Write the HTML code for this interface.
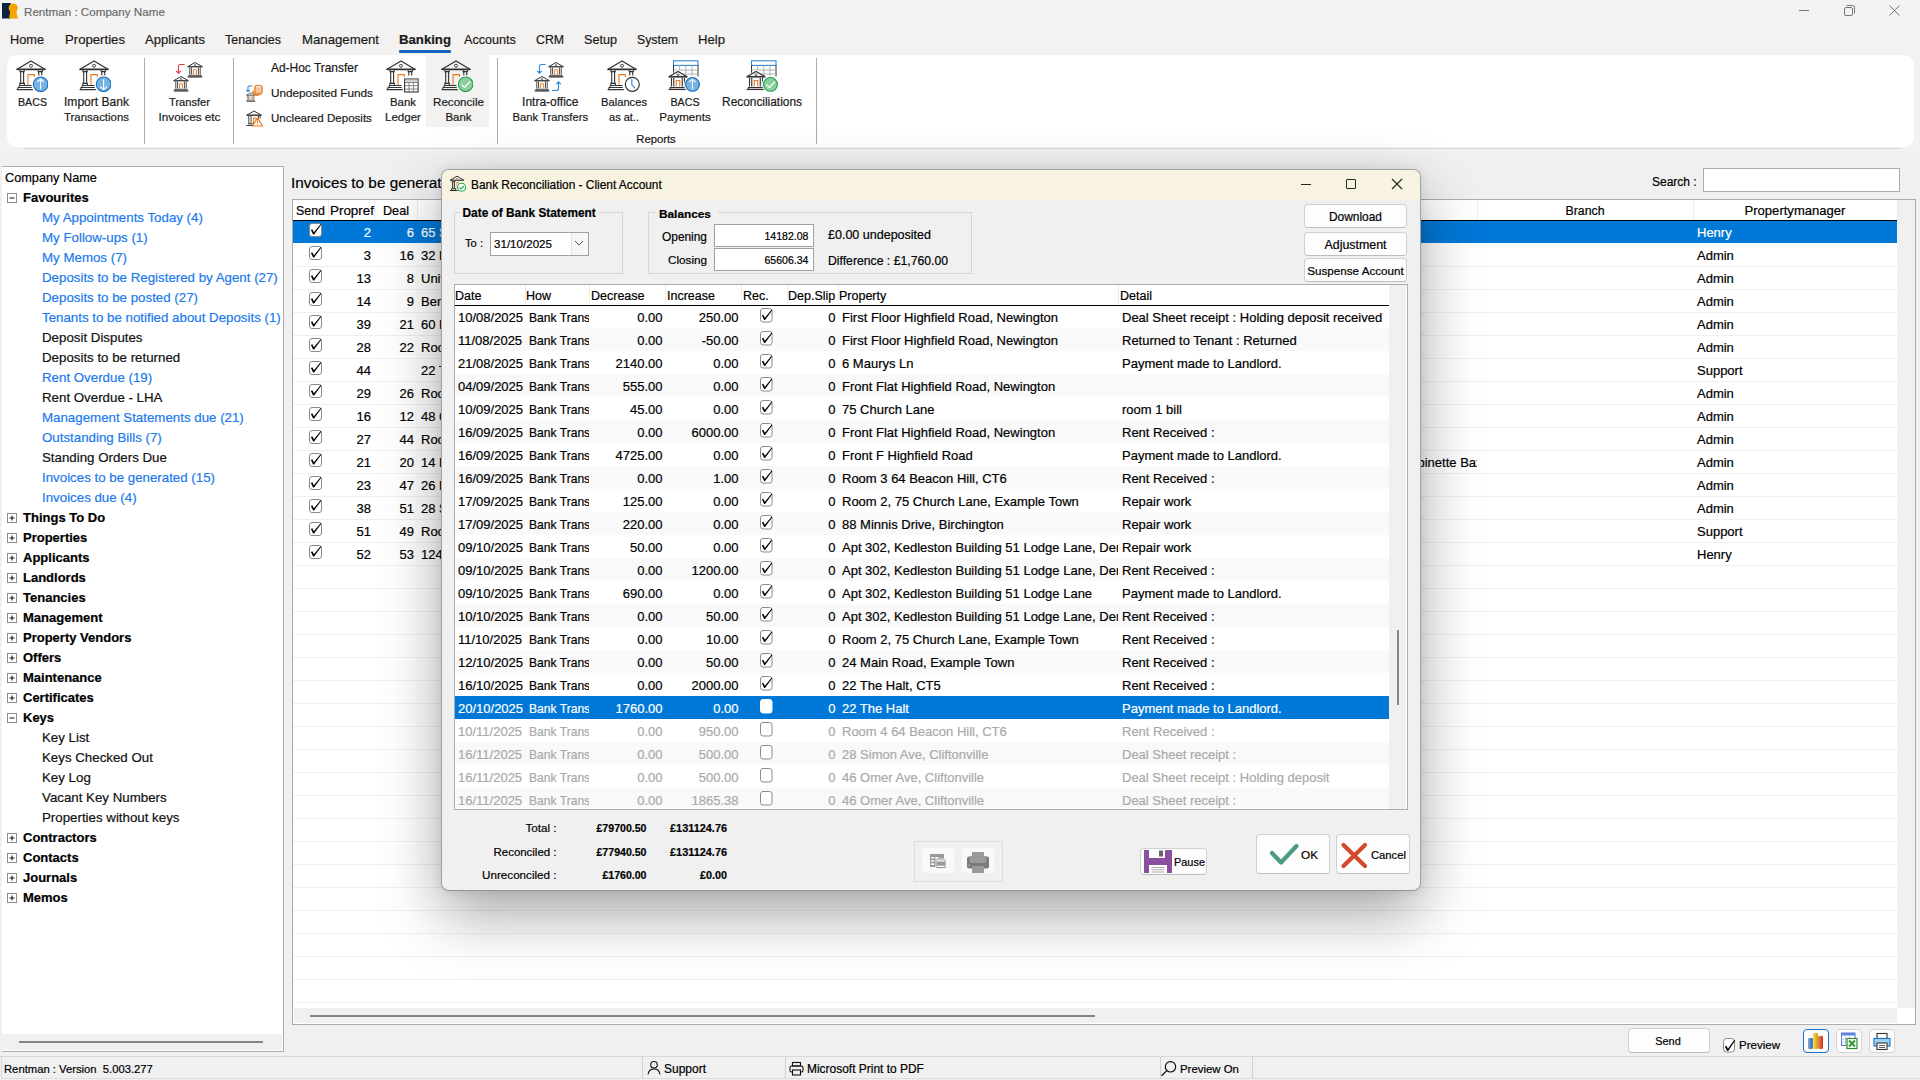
<!DOCTYPE html>
<html><head><meta charset="utf-8"><title>Rentman</title>
<style>html,body{margin:0;padding:0;}
body{width:1920px;height:1080px;overflow:hidden;position:relative;background:#f0f0f0;font-family:"Liberation Sans",sans-serif;}
.t{position:absolute;white-space:pre;line-height:20px;-webkit-text-stroke:0.2px currentColor;}
.a{position:absolute;}
</style></head>
<body>
<div class=a style="left:0;top:0;width:1920px;height:153px;background:#f3f2f0"></div>
<div class=a style="left:0;top:0;width:1920px;height:23px;background:#f3f3f3"></div>
<svg class=a style="left:1px;top:2px" width="18" height="18" viewBox="0 0 18 18"><rect x="1" y="1" width="8.8" height="15.5" fill="#0d2340"/><circle cx="12.2" cy="6" r="4.6" fill="#f7a400"/><path d="M9.6,7.5 L8,16.5 H17 L14.8,7.5 Z" fill="#f7a400"/></svg>
<div class=t style="top:2px;font-size:11.64px;color:#6c6c6c;left:24px;">Rentman : Company Name</div>
<div class=a style="left:1799px;top:10px;width:10px;height:1px;background:#777"></div>
<svg class=a style="left:1843px;top:4px" width="13" height="13" viewBox="0 0 13 13"><path d="M3.5,1.5 h6 a2,2 0 0 1 2,2 v6" fill="none" stroke="#777" stroke-width="1"/><rect x="1.5" y="3.5" width="8" height="8" rx="1.5" fill="none" stroke="#777" stroke-width="1"/></svg>
<svg class=a style="left:1888px;top:4px" width="13" height="13" viewBox="0 0 13 13"><path d="M1.5,1.5 L11.5,11.5 M11.5,1.5 L1.5,11.5" stroke="#777" stroke-width="1"/></svg>
<div class=t style="top:30px;font-size:12.75px;color:#1a1a1a;left:10px;">Home</div>
<div class=t style="top:30px;font-size:13.16px;color:#1a1a1a;left:65px;">Properties</div>
<div class=t style="top:30px;font-size:13.00px;color:#1a1a1a;left:145px;">Applicants</div>
<div class=t style="top:30px;font-size:12.44px;color:#1a1a1a;left:225px;">Tenancies</div>
<div class=t style="top:30px;font-size:13.19px;color:#1a1a1a;left:302px;">Management</div>
<div class=t style="top:30px;font-size:13.18px;color:#1a1a1a;font-weight:700;left:399px;">Banking</div>
<div class=t style="top:30px;font-size:12.64px;color:#1a1a1a;left:464px;">Accounts</div>
<div class=t style="top:30px;font-size:12.30px;color:#1a1a1a;left:536px;">CRM</div>
<div class=t style="top:30px;font-size:12.63px;color:#1a1a1a;left:584px;">Setup</div>
<div class=t style="top:30px;font-size:12.30px;color:#1a1a1a;left:637px;">System</div>
<div class=t style="top:30px;font-size:13.13px;color:#1a1a1a;left:698px;">Help</div>
<div class=a style="left:399px;top:50px;width:52px;height:3px;background:#1565c0;border-radius:1px"></div>
<div class=a style="left:7px;top:55px;width:1907px;height:92px;background:#fff;border-radius:10px"></div>
<div class=a style="left:23px;top:148px;width:1878px;height:1px;background:#d6d6d6"></div>
<div class=a style="left:426px;top:55px;width:63px;height:72px;background:#f3f2f0"></div>
<div class=a style="left:144px;top:58px;width:1px;height:86px;background:#aeaba8"></div>
<div class=a style="left:233px;top:58px;width:1px;height:86px;background:#aeaba8"></div>
<div class=a style="left:497px;top:58px;width:1px;height:86px;background:#aeaba8"></div>
<div class=a style="left:816px;top:58px;width:1px;height:86px;background:#aeaba8"></div>
<div class=t style="top:92px;font-size:10.65px;color:#1a1a1a;left:-267.5px;width:600px;text-align:center;">BACS</div>
<div class=t style="top:92px;font-size:12.06px;color:#1a1a1a;left:-203.5px;width:600px;text-align:center;">Import Bank</div>
<div class=t style="top:107px;font-size:11.43px;color:#1a1a1a;left:-203.5px;width:600px;text-align:center;">Transactions</div>
<div class=t style="top:92px;font-size:11.12px;color:#1a1a1a;left:-110.5px;width:600px;text-align:center;">Transfer</div>
<div class=t style="top:107px;font-size:11.74px;color:#1a1a1a;left:-110.5px;width:600px;text-align:center;">Invoices etc</div>
<div class=t style="top:92px;font-size:11.41px;color:#1a1a1a;left:103px;width:600px;text-align:center;">Bank</div>
<div class=t style="top:107px;font-size:11.56px;color:#1a1a1a;left:103px;width:600px;text-align:center;">Ledger</div>
<div class=t style="top:92px;font-size:11.61px;color:#1a1a1a;left:158.5px;width:600px;text-align:center;">Reconcile</div>
<div class=t style="top:107px;font-size:11.41px;color:#1a1a1a;left:158.5px;width:600px;text-align:center;">Bank</div>
<div class=t style="top:92px;font-size:12.00px;color:#1a1a1a;left:250.29999999999995px;width:600px;text-align:center;">Intra-office</div>
<div class=t style="top:107px;font-size:11.23px;color:#1a1a1a;left:250.29999999999995px;width:600px;text-align:center;">Bank Transfers</div>
<div class=t style="top:92px;font-size:11.18px;color:#1a1a1a;left:324px;width:600px;text-align:center;">Balances</div>
<div class=t style="top:107px;font-size:11.01px;color:#1a1a1a;left:324px;width:600px;text-align:center;">as at..</div>
<div class=t style="top:92px;font-size:10.65px;color:#1a1a1a;left:385px;width:600px;text-align:center;">BACS</div>
<div class=t style="top:107px;font-size:11.58px;color:#1a1a1a;left:385px;width:600px;text-align:center;">Payments</div>
<div class=t style="top:92px;font-size:11.89px;color:#1a1a1a;left:462px;width:600px;text-align:center;">Reconciliations</div>
<div class=t style="top:129px;font-size:11.28px;color:#1a1a1a;left:356px;width:600px;text-align:center;">Reports</div>
<div class=t style="top:58px;font-size:11.95px;color:#1a1a1a;left:271px;">Ad-Hoc Transfer</div>
<div class=t style="top:83px;font-size:11.76px;color:#1a1a1a;left:271px;">Undeposited Funds</div>
<div class=t style="top:108px;font-size:11.57px;color:#1a1a1a;left:271px;">Uncleared Deposits</div>
<div class=a style="left:2px;top:166px;width:281px;height:884px;background:#fff;border:1px solid #abacb2;border-left:0"></div>
<div class=a style="left:2px;top:1034px;width:280px;height:16px;background:#f0f0f0"></div>
<div class=a style="left:19px;top:1041px;width:244px;height:2px;background:#858585"></div>
<div class=t style="top:168px;font-size:12.73px;color:#000;left:5px;">Company Name</div>
<svg class=a style="left:6px;top:192px" width="11" height="11" viewBox="0 0 11 11"><rect x="1.5" y="1.5" width="9" height="9" fill="#fff" stroke="#8e8e8e"/><path d="M3.5,6 h5" stroke="#111" stroke-width="1"/></svg>
<div class=t style="top:188px;font-size:13.00px;color:#000;font-weight:700;left:23px;">Favourites</div>
<div class=t style="top:208px;font-size:13.30px;color:#1a7aee;left:42px;">My Appointments Today (4)</div>
<div class=t style="top:228px;font-size:13.30px;color:#1a7aee;left:42px;">My Follow-ups (1)</div>
<div class=t style="top:248px;font-size:13.30px;color:#1a7aee;left:42px;">My Memos (7)</div>
<div class=t style="top:268px;font-size:13.30px;color:#1a7aee;left:42px;">Deposits to be Registered by Agent (27)</div>
<div class=t style="top:288px;font-size:13.30px;color:#1a7aee;left:42px;">Deposits to be posted (27)</div>
<div class=t style="top:308px;font-size:13.30px;color:#1a7aee;left:42px;">Tenants to be notified about Deposits (1)</div>
<div class=t style="top:328px;font-size:13.30px;color:#111;left:42px;">Deposit Disputes</div>
<div class=t style="top:348px;font-size:13.30px;color:#111;left:42px;">Deposits to be returned</div>
<div class=t style="top:368px;font-size:13.30px;color:#1a7aee;left:42px;">Rent Overdue (19)</div>
<div class=t style="top:388px;font-size:13.30px;color:#111;left:42px;">Rent Overdue - LHA</div>
<div class=t style="top:408px;font-size:13.30px;color:#1a7aee;left:42px;">Management Statements due (21)</div>
<div class=t style="top:428px;font-size:13.30px;color:#1a7aee;left:42px;">Outstanding Bills (7)</div>
<div class=t style="top:448px;font-size:13.30px;color:#111;left:42px;">Standing Orders Due</div>
<div class=t style="top:468px;font-size:13.30px;color:#1a7aee;left:42px;">Invoices to be generated (15)</div>
<div class=t style="top:488px;font-size:13.30px;color:#1a7aee;left:42px;">Invoices due (4)</div>
<svg class=a style="left:6px;top:512px" width="11" height="11" viewBox="0 0 11 11"><rect x="1.5" y="1.5" width="9" height="9" fill="#fff" stroke="#8e8e8e"/><path d="M3.5,6 h5 M6,3.5 v5" stroke="#111" stroke-width="1"/></svg>
<div class=t style="top:508px;font-size:13.00px;color:#000;font-weight:700;left:23px;">Things To Do</div>
<svg class=a style="left:6px;top:532px" width="11" height="11" viewBox="0 0 11 11"><rect x="1.5" y="1.5" width="9" height="9" fill="#fff" stroke="#8e8e8e"/><path d="M3.5,6 h5 M6,3.5 v5" stroke="#111" stroke-width="1"/></svg>
<div class=t style="top:528px;font-size:13.00px;color:#000;font-weight:700;left:23px;">Properties</div>
<svg class=a style="left:6px;top:552px" width="11" height="11" viewBox="0 0 11 11"><rect x="1.5" y="1.5" width="9" height="9" fill="#fff" stroke="#8e8e8e"/><path d="M3.5,6 h5 M6,3.5 v5" stroke="#111" stroke-width="1"/></svg>
<div class=t style="top:548px;font-size:13.00px;color:#000;font-weight:700;left:23px;">Applicants</div>
<svg class=a style="left:6px;top:572px" width="11" height="11" viewBox="0 0 11 11"><rect x="1.5" y="1.5" width="9" height="9" fill="#fff" stroke="#8e8e8e"/><path d="M3.5,6 h5 M6,3.5 v5" stroke="#111" stroke-width="1"/></svg>
<div class=t style="top:568px;font-size:13.00px;color:#000;font-weight:700;left:23px;">Landlords</div>
<svg class=a style="left:6px;top:592px" width="11" height="11" viewBox="0 0 11 11"><rect x="1.5" y="1.5" width="9" height="9" fill="#fff" stroke="#8e8e8e"/><path d="M3.5,6 h5 M6,3.5 v5" stroke="#111" stroke-width="1"/></svg>
<div class=t style="top:588px;font-size:13.00px;color:#000;font-weight:700;left:23px;">Tenancies</div>
<svg class=a style="left:6px;top:612px" width="11" height="11" viewBox="0 0 11 11"><rect x="1.5" y="1.5" width="9" height="9" fill="#fff" stroke="#8e8e8e"/><path d="M3.5,6 h5 M6,3.5 v5" stroke="#111" stroke-width="1"/></svg>
<div class=t style="top:608px;font-size:13.00px;color:#000;font-weight:700;left:23px;">Management</div>
<svg class=a style="left:6px;top:632px" width="11" height="11" viewBox="0 0 11 11"><rect x="1.5" y="1.5" width="9" height="9" fill="#fff" stroke="#8e8e8e"/><path d="M3.5,6 h5 M6,3.5 v5" stroke="#111" stroke-width="1"/></svg>
<div class=t style="top:628px;font-size:13.00px;color:#000;font-weight:700;left:23px;">Property Vendors</div>
<svg class=a style="left:6px;top:652px" width="11" height="11" viewBox="0 0 11 11"><rect x="1.5" y="1.5" width="9" height="9" fill="#fff" stroke="#8e8e8e"/><path d="M3.5,6 h5 M6,3.5 v5" stroke="#111" stroke-width="1"/></svg>
<div class=t style="top:648px;font-size:13.00px;color:#000;font-weight:700;left:23px;">Offers</div>
<svg class=a style="left:6px;top:672px" width="11" height="11" viewBox="0 0 11 11"><rect x="1.5" y="1.5" width="9" height="9" fill="#fff" stroke="#8e8e8e"/><path d="M3.5,6 h5 M6,3.5 v5" stroke="#111" stroke-width="1"/></svg>
<div class=t style="top:668px;font-size:13.00px;color:#000;font-weight:700;left:23px;">Maintenance</div>
<svg class=a style="left:6px;top:692px" width="11" height="11" viewBox="0 0 11 11"><rect x="1.5" y="1.5" width="9" height="9" fill="#fff" stroke="#8e8e8e"/><path d="M3.5,6 h5 M6,3.5 v5" stroke="#111" stroke-width="1"/></svg>
<div class=t style="top:688px;font-size:13.00px;color:#000;font-weight:700;left:23px;">Certificates</div>
<svg class=a style="left:6px;top:712px" width="11" height="11" viewBox="0 0 11 11"><rect x="1.5" y="1.5" width="9" height="9" fill="#fff" stroke="#8e8e8e"/><path d="M3.5,6 h5" stroke="#111" stroke-width="1"/></svg>
<div class=t style="top:708px;font-size:13.00px;color:#000;font-weight:700;left:23px;">Keys</div>
<div class=t style="top:728px;font-size:13.30px;color:#111;left:42px;">Key List</div>
<div class=t style="top:748px;font-size:13.30px;color:#111;left:42px;">Keys Checked Out</div>
<div class=t style="top:768px;font-size:13.30px;color:#111;left:42px;">Key Log</div>
<div class=t style="top:788px;font-size:13.30px;color:#111;left:42px;">Vacant Key Numbers</div>
<div class=t style="top:808px;font-size:13.30px;color:#111;left:42px;">Properties without keys</div>
<svg class=a style="left:6px;top:832px" width="11" height="11" viewBox="0 0 11 11"><rect x="1.5" y="1.5" width="9" height="9" fill="#fff" stroke="#8e8e8e"/><path d="M3.5,6 h5 M6,3.5 v5" stroke="#111" stroke-width="1"/></svg>
<div class=t style="top:828px;font-size:13.00px;color:#000;font-weight:700;left:23px;">Contractors</div>
<svg class=a style="left:6px;top:852px" width="11" height="11" viewBox="0 0 11 11"><rect x="1.5" y="1.5" width="9" height="9" fill="#fff" stroke="#8e8e8e"/><path d="M3.5,6 h5 M6,3.5 v5" stroke="#111" stroke-width="1"/></svg>
<div class=t style="top:848px;font-size:13.00px;color:#000;font-weight:700;left:23px;">Contacts</div>
<svg class=a style="left:6px;top:872px" width="11" height="11" viewBox="0 0 11 11"><rect x="1.5" y="1.5" width="9" height="9" fill="#fff" stroke="#8e8e8e"/><path d="M3.5,6 h5 M6,3.5 v5" stroke="#111" stroke-width="1"/></svg>
<div class=t style="top:868px;font-size:13.00px;color:#000;font-weight:700;left:23px;">Journals</div>
<svg class=a style="left:6px;top:892px" width="11" height="11" viewBox="0 0 11 11"><rect x="1.5" y="1.5" width="9" height="9" fill="#fff" stroke="#8e8e8e"/><path d="M3.5,6 h5 M6,3.5 v5" stroke="#111" stroke-width="1"/></svg>
<div class=t style="top:888px;font-size:13.00px;color:#000;font-weight:700;left:23px;">Memos</div>
<div class=t style="top:173px;font-size:15.30px;color:#000;left:291px;">Invoices to be generated (15)</div>
<div class=t style="top:172px;font-size:12.00px;color:#000;left:1652px;">Search :</div>
<div class=a style="left:1703px;top:168px;width:195px;height:22px;background:#fff;border:1px solid #a9abb1"></div>
<div class=a style="left:292px;top:199px;width:1622px;height:824px;background:#fff;border:1px solid #abacb2"></div>
<div class=a style="left:1897px;top:200px;width:18px;height:808px;background:#f0f0f0"></div>
<div class=a style="left:294px;top:1008px;width:1603px;height:15px;background:#f0f0f0"></div>
<div class=a style="left:310px;top:1015px;width:785px;height:2px;background:#858585"></div>
<div class=a style="left:293px;top:220px;width:1604px;height:1px;background:#000"></div>
<div class=a style="left:328px;top:200px;width:1px;height:20px;background:#ececec"></div>
<div class=a style="left:374px;top:200px;width:1px;height:20px;background:#ececec"></div>
<div class=a style="left:417px;top:200px;width:1px;height:20px;background:#ececec"></div>
<div class=a style="left:1477px;top:200px;width:1px;height:20px;background:#ececec"></div>
<div class=a style="left:1693px;top:200px;width:1px;height:20px;background:#ececec"></div>
<div class=a style="left:1897px;top:200px;width:1px;height:20px;background:#ececec"></div>
<div class=t style="top:201px;font-size:12.42px;color:#000;left:296px;">Send</div>
<div class=t style="top:201px;font-size:13.42px;color:#000;left:330px;">Propref</div>
<div class=t style="top:201px;font-size:12.64px;color:#000;left:383px;">Deal</div>
<div class=t style="top:201px;font-size:12.31px;color:#000;left:1285px;width:600px;text-align:center;">Branch</div>
<div class=t style="top:201px;font-size:13.07px;color:#000;left:1495px;width:600px;text-align:center;">Propertymanager</div>
<div class=a style="left:293px;top:221px;width:1604px;height:22px;background:#0078d7"></div>
<div class=a style="left:293px;top:266px;width:1604px;height:1px;background:#f0f0f0"></div>
<div class=a style="left:293px;top:289px;width:1604px;height:1px;background:#f0f0f0"></div>
<div class=a style="left:293px;top:312px;width:1604px;height:1px;background:#f0f0f0"></div>
<div class=a style="left:293px;top:335px;width:1604px;height:1px;background:#f0f0f0"></div>
<div class=a style="left:293px;top:358px;width:1604px;height:1px;background:#f0f0f0"></div>
<div class=a style="left:293px;top:381px;width:1604px;height:1px;background:#f0f0f0"></div>
<div class=a style="left:293px;top:404px;width:1604px;height:1px;background:#f0f0f0"></div>
<div class=a style="left:293px;top:427px;width:1604px;height:1px;background:#f0f0f0"></div>
<div class=a style="left:293px;top:450px;width:1604px;height:1px;background:#f0f0f0"></div>
<div class=a style="left:293px;top:473px;width:1604px;height:1px;background:#f0f0f0"></div>
<div class=a style="left:293px;top:496px;width:1604px;height:1px;background:#f0f0f0"></div>
<div class=a style="left:293px;top:519px;width:1604px;height:1px;background:#f0f0f0"></div>
<div class=a style="left:293px;top:542px;width:1604px;height:1px;background:#f0f0f0"></div>
<div class=a style="left:293px;top:565px;width:1604px;height:1px;background:#f0f0f0"></div>
<div class=a style="left:293px;top:588px;width:1604px;height:1px;background:#f0f0f0"></div>
<div class=a style="left:293px;top:611px;width:1604px;height:1px;background:#f0f0f0"></div>
<div class=a style="left:293px;top:634px;width:1604px;height:1px;background:#f0f0f0"></div>
<div class=a style="left:293px;top:657px;width:1604px;height:1px;background:#f0f0f0"></div>
<div class=a style="left:293px;top:680px;width:1604px;height:1px;background:#f0f0f0"></div>
<div class=a style="left:293px;top:703px;width:1604px;height:1px;background:#f0f0f0"></div>
<div class=a style="left:293px;top:726px;width:1604px;height:1px;background:#f0f0f0"></div>
<div class=a style="left:293px;top:749px;width:1604px;height:1px;background:#f0f0f0"></div>
<div class=a style="left:293px;top:772px;width:1604px;height:1px;background:#f0f0f0"></div>
<div class=a style="left:293px;top:795px;width:1604px;height:1px;background:#f0f0f0"></div>
<div class=a style="left:293px;top:818px;width:1604px;height:1px;background:#f0f0f0"></div>
<div class=a style="left:293px;top:841px;width:1604px;height:1px;background:#f0f0f0"></div>
<div class=a style="left:293px;top:864px;width:1604px;height:1px;background:#f0f0f0"></div>
<div class=a style="left:293px;top:887px;width:1604px;height:1px;background:#f0f0f0"></div>
<div class=a style="left:293px;top:910px;width:1604px;height:1px;background:#f0f0f0"></div>
<div class=a style="left:293px;top:933px;width:1604px;height:1px;background:#f0f0f0"></div>
<div class=a style="left:293px;top:956px;width:1604px;height:1px;background:#f0f0f0"></div>
<div class=a style="left:293px;top:979px;width:1604px;height:1px;background:#f0f0f0"></div>
<div class=a style="left:293px;top:1002px;width:1604px;height:1px;background:#f0f0f0"></div>
<div class=t style="top:223px;font-size:13.00px;color:#fff;left:-229px;width:600px;text-align:right;">2</div>
<div class=t style="top:223px;font-size:13.00px;color:#fff;left:-186px;width:600px;text-align:right;">6</div>
<div class=t style="top:223px;font-size:13.00px;color:#fff;left:421px;">65 S</div>
<div class=t style="top:223px;font-size:13.00px;color:#fff;left:1697px;">Henry</div>
<svg class=a style="left:309px;top:223px" width="13" height="14" viewBox="0 0 13 14"><rect x="0.5" y="0.5" width="12" height="13" rx="2.5" fill="#fff" stroke="#8a8a8a"/><path d="M1.9,6.9 L3.3,6.2 L4.9,9.3 L11.7,1 L12.4,1.6 L5.1,11.5 L4.1,11.5 Z" fill="#000"/></svg>
<div class=t style="top:246px;font-size:13.00px;color:#000;left:-229px;width:600px;text-align:right;">3</div>
<div class=t style="top:246px;font-size:13.00px;color:#000;left:-186px;width:600px;text-align:right;">16</div>
<div class=t style="top:246px;font-size:13.00px;color:#000;left:421px;">32 P</div>
<div class=t style="top:246px;font-size:13.00px;color:#000;left:1697px;">Admin</div>
<svg class=a style="left:309px;top:246px" width="13" height="14" viewBox="0 0 13 14"><rect x="0.5" y="0.5" width="12" height="13" rx="2.5" fill="#fff" stroke="#8a8a8a"/><path d="M1.9,6.9 L3.3,6.2 L4.9,9.3 L11.7,1 L12.4,1.6 L5.1,11.5 L4.1,11.5 Z" fill="#000"/></svg>
<div class=t style="top:269px;font-size:13.00px;color:#000;left:-229px;width:600px;text-align:right;">13</div>
<div class=t style="top:269px;font-size:13.00px;color:#000;left:-186px;width:600px;text-align:right;">8</div>
<div class=t style="top:269px;font-size:13.00px;color:#000;left:421px;">Unit</div>
<div class=t style="top:269px;font-size:13.00px;color:#000;left:1697px;">Admin</div>
<svg class=a style="left:309px;top:269px" width="13" height="14" viewBox="0 0 13 14"><rect x="0.5" y="0.5" width="12" height="13" rx="2.5" fill="#fff" stroke="#8a8a8a"/><path d="M1.9,6.9 L3.3,6.2 L4.9,9.3 L11.7,1 L12.4,1.6 L5.1,11.5 L4.1,11.5 Z" fill="#000"/></svg>
<div class=t style="top:292px;font-size:13.00px;color:#000;left:-229px;width:600px;text-align:right;">14</div>
<div class=t style="top:292px;font-size:13.00px;color:#000;left:-186px;width:600px;text-align:right;">9</div>
<div class=t style="top:292px;font-size:13.00px;color:#000;left:421px;">Ben</div>
<div class=t style="top:292px;font-size:13.00px;color:#000;left:1697px;">Admin</div>
<svg class=a style="left:309px;top:292px" width="13" height="14" viewBox="0 0 13 14"><rect x="0.5" y="0.5" width="12" height="13" rx="2.5" fill="#fff" stroke="#8a8a8a"/><path d="M1.9,6.9 L3.3,6.2 L4.9,9.3 L11.7,1 L12.4,1.6 L5.1,11.5 L4.1,11.5 Z" fill="#000"/></svg>
<div class=t style="top:315px;font-size:13.00px;color:#000;left:-229px;width:600px;text-align:right;">39</div>
<div class=t style="top:315px;font-size:13.00px;color:#000;left:-186px;width:600px;text-align:right;">21</div>
<div class=t style="top:315px;font-size:13.00px;color:#000;left:421px;">60 M</div>
<div class=t style="top:315px;font-size:13.00px;color:#000;left:1697px;">Admin</div>
<svg class=a style="left:309px;top:315px" width="13" height="14" viewBox="0 0 13 14"><rect x="0.5" y="0.5" width="12" height="13" rx="2.5" fill="#fff" stroke="#8a8a8a"/><path d="M1.9,6.9 L3.3,6.2 L4.9,9.3 L11.7,1 L12.4,1.6 L5.1,11.5 L4.1,11.5 Z" fill="#000"/></svg>
<div class=t style="top:338px;font-size:13.00px;color:#000;left:-229px;width:600px;text-align:right;">28</div>
<div class=t style="top:338px;font-size:13.00px;color:#000;left:-186px;width:600px;text-align:right;">22</div>
<div class=t style="top:338px;font-size:13.00px;color:#000;left:421px;">Roo</div>
<div class=t style="top:338px;font-size:13.00px;color:#000;left:1697px;">Admin</div>
<svg class=a style="left:309px;top:338px" width="13" height="14" viewBox="0 0 13 14"><rect x="0.5" y="0.5" width="12" height="13" rx="2.5" fill="#fff" stroke="#8a8a8a"/><path d="M1.9,6.9 L3.3,6.2 L4.9,9.3 L11.7,1 L12.4,1.6 L5.1,11.5 L4.1,11.5 Z" fill="#000"/></svg>
<div class=t style="top:361px;font-size:13.00px;color:#000;left:-229px;width:600px;text-align:right;">44</div>
<div class=t style="top:361px;font-size:13.00px;color:#000;left:-186px;width:600px;text-align:right;"></div>
<div class=t style="top:361px;font-size:13.00px;color:#000;left:421px;">22 T</div>
<div class=t style="top:361px;font-size:13.00px;color:#000;left:1697px;">Support</div>
<svg class=a style="left:309px;top:361px" width="13" height="14" viewBox="0 0 13 14"><rect x="0.5" y="0.5" width="12" height="13" rx="2.5" fill="#fff" stroke="#8a8a8a"/><path d="M1.9,6.9 L3.3,6.2 L4.9,9.3 L11.7,1 L12.4,1.6 L5.1,11.5 L4.1,11.5 Z" fill="#000"/></svg>
<div class=t style="top:384px;font-size:13.00px;color:#000;left:-229px;width:600px;text-align:right;">29</div>
<div class=t style="top:384px;font-size:13.00px;color:#000;left:-186px;width:600px;text-align:right;">26</div>
<div class=t style="top:384px;font-size:13.00px;color:#000;left:421px;">Roo</div>
<div class=t style="top:384px;font-size:13.00px;color:#000;left:1697px;">Admin</div>
<svg class=a style="left:309px;top:384px" width="13" height="14" viewBox="0 0 13 14"><rect x="0.5" y="0.5" width="12" height="13" rx="2.5" fill="#fff" stroke="#8a8a8a"/><path d="M1.9,6.9 L3.3,6.2 L4.9,9.3 L11.7,1 L12.4,1.6 L5.1,11.5 L4.1,11.5 Z" fill="#000"/></svg>
<div class=t style="top:407px;font-size:13.00px;color:#000;left:-229px;width:600px;text-align:right;">16</div>
<div class=t style="top:407px;font-size:13.00px;color:#000;left:-186px;width:600px;text-align:right;">12</div>
<div class=t style="top:407px;font-size:13.00px;color:#000;left:421px;">48 C</div>
<div class=t style="top:407px;font-size:13.00px;color:#000;left:1697px;">Admin</div>
<svg class=a style="left:309px;top:407px" width="13" height="14" viewBox="0 0 13 14"><rect x="0.5" y="0.5" width="12" height="13" rx="2.5" fill="#fff" stroke="#8a8a8a"/><path d="M1.9,6.9 L3.3,6.2 L4.9,9.3 L11.7,1 L12.4,1.6 L5.1,11.5 L4.1,11.5 Z" fill="#000"/></svg>
<div class=t style="top:430px;font-size:13.00px;color:#000;left:-229px;width:600px;text-align:right;">27</div>
<div class=t style="top:430px;font-size:13.00px;color:#000;left:-186px;width:600px;text-align:right;">44</div>
<div class=t style="top:430px;font-size:13.00px;color:#000;left:421px;">Roo</div>
<div class=t style="top:430px;font-size:13.00px;color:#000;left:1697px;">Admin</div>
<svg class=a style="left:309px;top:430px" width="13" height="14" viewBox="0 0 13 14"><rect x="0.5" y="0.5" width="12" height="13" rx="2.5" fill="#fff" stroke="#8a8a8a"/><path d="M1.9,6.9 L3.3,6.2 L4.9,9.3 L11.7,1 L12.4,1.6 L5.1,11.5 L4.1,11.5 Z" fill="#000"/></svg>
<div class=t style="top:453px;font-size:13.00px;color:#000;left:-229px;width:600px;text-align:right;">21</div>
<div class=t style="top:453px;font-size:13.00px;color:#000;left:-186px;width:600px;text-align:right;">20</div>
<div class=t style="top:453px;font-size:13.00px;color:#000;left:421px;">14 F</div>
<div class=t style="top:453px;font-size:13.00px;color:#000;left:1697px;">Admin</div>
<svg class=a style="left:309px;top:453px" width="13" height="14" viewBox="0 0 13 14"><rect x="0.5" y="0.5" width="12" height="13" rx="2.5" fill="#fff" stroke="#8a8a8a"/><path d="M1.9,6.9 L3.3,6.2 L4.9,9.3 L11.7,1 L12.4,1.6 L5.1,11.5 L4.1,11.5 Z" fill="#000"/></svg>
<div class=t style="top:476px;font-size:13.00px;color:#000;left:-229px;width:600px;text-align:right;">23</div>
<div class=t style="top:476px;font-size:13.00px;color:#000;left:-186px;width:600px;text-align:right;">47</div>
<div class=t style="top:476px;font-size:13.00px;color:#000;left:421px;">26 R</div>
<div class=t style="top:476px;font-size:13.00px;color:#000;left:1697px;">Admin</div>
<svg class=a style="left:309px;top:476px" width="13" height="14" viewBox="0 0 13 14"><rect x="0.5" y="0.5" width="12" height="13" rx="2.5" fill="#fff" stroke="#8a8a8a"/><path d="M1.9,6.9 L3.3,6.2 L4.9,9.3 L11.7,1 L12.4,1.6 L5.1,11.5 L4.1,11.5 Z" fill="#000"/></svg>
<div class=t style="top:499px;font-size:13.00px;color:#000;left:-229px;width:600px;text-align:right;">38</div>
<div class=t style="top:499px;font-size:13.00px;color:#000;left:-186px;width:600px;text-align:right;">51</div>
<div class=t style="top:499px;font-size:13.00px;color:#000;left:421px;">28 S</div>
<div class=t style="top:499px;font-size:13.00px;color:#000;left:1697px;">Admin</div>
<svg class=a style="left:309px;top:499px" width="13" height="14" viewBox="0 0 13 14"><rect x="0.5" y="0.5" width="12" height="13" rx="2.5" fill="#fff" stroke="#8a8a8a"/><path d="M1.9,6.9 L3.3,6.2 L4.9,9.3 L11.7,1 L12.4,1.6 L5.1,11.5 L4.1,11.5 Z" fill="#000"/></svg>
<div class=t style="top:522px;font-size:13.00px;color:#000;left:-229px;width:600px;text-align:right;">51</div>
<div class=t style="top:522px;font-size:13.00px;color:#000;left:-186px;width:600px;text-align:right;">49</div>
<div class=t style="top:522px;font-size:13.00px;color:#000;left:421px;">Roo</div>
<div class=t style="top:522px;font-size:13.00px;color:#000;left:1697px;">Support</div>
<svg class=a style="left:309px;top:522px" width="13" height="14" viewBox="0 0 13 14"><rect x="0.5" y="0.5" width="12" height="13" rx="2.5" fill="#fff" stroke="#8a8a8a"/><path d="M1.9,6.9 L3.3,6.2 L4.9,9.3 L11.7,1 L12.4,1.6 L5.1,11.5 L4.1,11.5 Z" fill="#000"/></svg>
<div class=t style="top:545px;font-size:13.00px;color:#000;left:-229px;width:600px;text-align:right;">52</div>
<div class=t style="top:545px;font-size:13.00px;color:#000;left:-186px;width:600px;text-align:right;">53</div>
<div class=t style="top:545px;font-size:13.00px;color:#000;left:421px;">124</div>
<div class=t style="top:545px;font-size:13.00px;color:#000;left:1697px;">Henry</div>
<svg class=a style="left:309px;top:545px" width="13" height="14" viewBox="0 0 13 14"><rect x="0.5" y="0.5" width="12" height="13" rx="2.5" fill="#fff" stroke="#8a8a8a"/><path d="M1.9,6.9 L3.3,6.2 L4.9,9.3 L11.7,1 L12.4,1.6 L5.1,11.5 L4.1,11.5 Z" fill="#000"/></svg>
<div class=a style="left:1400px;top:451px;width:77px;height:22px;overflow:hidden">
<div class=t style="top:2px;font-size:13.00px;color:#000;left:17.5px;">binette Baxter</div>
</div>
<div class=a style="left:1628px;top:1028px;width:80px;height:23px;background:#fdfdfd;border:1px solid #d0d0d0;border-radius:4px;border-bottom-color:#bcbcbc"></div>
<div class=t style="top:1031px;font-size:10.92px;color:#000;left:1368px;width:600px;text-align:center;">Send</div>
<svg class=a style="left:1723px;top:1038px" width="13" height="15" viewBox="0 0 13 15"><rect x="0.5" y="0.5" width="11" height="13.5" rx="3" fill="#fff" stroke="#8a8a8a"/><path d="M1.9,8.4 L3.4,7.7 L5,10.8 L11.2,2 L12.2,2.6 L5.2,13 L4.2,13 Z" fill="#000"/></svg>
<div class=t style="top:1035px;font-size:11.53px;color:#000;left:1739px;">Preview</div>
<div class=a style="left:1803px;top:1029px;width:24px;height:22px;background:#fcfcfc;border:1px solid #1a73c8;border-radius:4px"></div>
<div class=a style="left:1836px;top:1029px;width:24px;height:22px;background:#fcfcfc;border:1px solid #d4d4d4;border-radius:4px"></div>
<div class=a style="left:1869px;top:1029px;width:24px;height:22px;background:#fcfcfc;border:1px solid #d4d4d4;border-radius:4px"></div>
<div class=a style="left:0;top:1056px;width:1920px;height:1px;background:#d8d8d8"></div>
<div class=a style="left:1px;top:1056px;width:1px;height:22px;background:#d8d8d8"></div>
<div class=a style="left:0;top:1078px;width:1920px;height:1px;background:#dcdcdc"></div>
<div class=a style="left:642px;top:1057px;width:1px;height:21px;background:#d0d0d0"></div>
<div class=a style="left:785px;top:1057px;width:1px;height:21px;background:#d0d0d0"></div>
<div class=a style="left:1160px;top:1057px;width:1px;height:21px;background:#d0d0d0"></div>
<div class=a style="left:1252px;top:1057px;width:1px;height:21px;background:#d0d0d0"></div>
<div class=t style="top:1059px;font-size:11.26px;color:#000;left:4px;">Rentman : Version  5.003.277</div>
<div class=t style="top:1059px;font-size:11.99px;color:#000;left:664px;">Support</div>
<div class=t style="top:1059px;font-size:11.96px;color:#000;left:807px;">Microsoft Print to PDF</div>
<div class=t style="top:1059px;font-size:11.42px;color:#000;left:1180px;">Preview On</div>
<div class=a style="left:441px;top:169px;width:978px;height:720px;background:#f0f0f0;border:1px solid #a2a2a2;border-bottom-color:#959595;border-radius:8px;box-shadow:0 24px 60px rgba(0,0,0,0.35),0 0 10px rgba(0,0,0,0.1)"></div>
<div class=a style="left:442px;top:170px;width:978px;height:30px;background:#f8f3e0;border-radius:7px 7px 0 0"></div>
<div class=t style="top:175px;font-size:11.89px;color:#000;left:471px;">Bank Reconciliation - Client Account</div>
<div class=a style="left:1301px;top:184px;width:10px;height:1px;background:#222"></div>
<div class=a style="left:1346px;top:179px;width:8px;height:8px;border:1px solid #222;border-radius:1px"></div>
<svg class=a style="left:1391px;top:178px" width="12" height="12" viewBox="0 0 12 12"><path d="M1,1 L11,11 M11,1 L1,11" stroke="#222" stroke-width="1.1"/></svg>
<div class=a style="left:454px;top:212px;width:167px;height:60px;border:1px solid #d5d5d5"></div>
<div class=a style="left:460px;top:205px;width:139px;height:14px;background:#f0f0f0"></div>
<div class=t style="top:203px;font-size:11.89px;color:#000;font-weight:700;left:462.5px;">Date of Bank Statement</div>
<div class=t style="top:233px;font-size:11.17px;color:#000;left:465px;">To :</div>
<div class=a style="left:490px;top:232px;width:97px;height:22px;background:#fff;border:1px solid #a0a0a0"></div>
<div class=a style="left:571px;top:233px;width:16px;height:22px;background:#f7f7f7;border-left:1px solid #e4e4e4"></div>
<svg class=a style="left:573px;top:238px" width="12" height="10" viewBox="0 0 12 10"><path d="M2,3 L6,7 L10,3" fill="none" stroke="#555" stroke-width="1"/></svg>
<div class=t style="top:234px;font-size:11.59px;color:#000;left:494px;">31/10/2025</div>
<div class=a style="left:648px;top:212px;width:322px;height:60px;border:1px solid #d5d5d5"></div>
<div class=a style="left:656px;top:205px;width:62px;height:14px;background:#f0f0f0"></div>
<div class=t style="top:204px;font-size:11.84px;color:#000;font-weight:700;left:659px;">Balances</div>
<div class=t style="top:227px;font-size:11.90px;color:#000;left:107px;width:600px;text-align:right;">Opening</div>
<div class=t style="top:250px;font-size:11.69px;color:#000;left:107px;width:600px;text-align:right;">Closing</div>
<div class=a style="left:714px;top:224px;width:98px;height:21px;background:#fff;border:1px solid #a0a0a0"></div>
<div class=a style="left:714px;top:248px;width:98px;height:21px;background:#fff;border:1px solid #a0a0a0"></div>
<div class=t style="top:226px;font-size:10.55px;color:#000;left:208.5px;width:600px;text-align:right;">14182.08</div>
<div class=t style="top:250px;font-size:10.55px;color:#000;left:208.5px;width:600px;text-align:right;">65606.34</div>
<div class=t style="top:225px;font-size:12.52px;color:#000;left:828px;">£0.00 undeposited</div>
<div class=t style="top:251px;font-size:12.22px;color:#000;left:828px;">Difference : £1,760.00</div>
<div class=a style="left:1304px;top:204px;width:101px;height:22px;background:#fdfdfd;border:1px solid #d0d0d0;border-bottom-color:#bdbdbd;border-radius:4px"></div>
<div class=t style="top:207px;font-size:11.92px;color:#000;left:1055.5px;width:600px;text-align:center;">Download</div>
<div class=a style="left:1304px;top:232px;width:101px;height:22px;background:#fdfdfd;border:1px solid #d0d0d0;border-bottom-color:#bdbdbd;border-radius:4px"></div>
<div class=t style="top:235px;font-size:12.39px;color:#000;left:1055.5px;width:600px;text-align:center;">Adjustment</div>
<div class=a style="left:1304px;top:258px;width:101px;height:22px;background:#fdfdfd;border:1px solid #d0d0d0;border-bottom-color:#bdbdbd;border-radius:4px"></div>
<div class=t style="top:261px;font-size:11.65px;color:#000;left:1055.5px;width:600px;text-align:center;">Suspense Account</div>
<div class=a style="left:454px;top:284px;width:952px;height:524px;background:#fff;border:1px solid #abacb2"></div>
<div class=a style="left:1389px;top:285px;width:17px;height:524px;background:#f0f0f0"></div>
<div class=a style="left:1397px;top:630px;width:2px;height:75px;background:#858585"></div>
<div class=a style="left:455px;top:305px;width:934px;height:1px;background:#000"></div>
<div class=a style="left:525px;top:285px;width:1px;height:20px;background:#ececec"></div>
<div class=a style="left:589px;top:285px;width:1px;height:20px;background:#ececec"></div>
<div class=a style="left:665px;top:285px;width:1px;height:20px;background:#ececec"></div>
<div class=a style="left:741px;top:285px;width:1px;height:20px;background:#ececec"></div>
<div class=a style="left:787px;top:285px;width:1px;height:20px;background:#ececec"></div>
<div class=a style="left:838px;top:285px;width:1px;height:20px;background:#ececec"></div>
<div class=a style="left:1118px;top:285px;width:1px;height:20px;background:#ececec"></div>
<div class=t style="top:286px;font-size:12.50px;color:#000;left:455px;">Date</div>
<div class=t style="top:286px;font-size:12.50px;color:#000;left:526px;">How</div>
<div class=t style="top:286px;font-size:12.50px;color:#000;left:591px;">Decrease</div>
<div class=t style="top:286px;font-size:12.50px;color:#000;left:667px;">Increase</div>
<div class=t style="top:286px;font-size:12.50px;color:#000;left:743px;">Rec.</div>
<div class=t style="top:286px;font-size:12.50px;color:#000;left:788px;">Dep.Slip</div>
<div class=t style="top:286px;font-size:12.50px;color:#000;left:839px;">Property</div>
<div class=t style="top:286px;font-size:12.50px;color:#000;left:1120px;">Detail</div>
<div class=a style="left:455px;top:306px;width:934px;height:502px;overflow:hidden">
<div class=a style="left:0;top:-1px;width:934px;height:23px;background:#fff"></div>
<div class=t style="top:2px;font-size:13.00px;color:#000;left:3px;">10/08/2025</div>
<div class=a style="left:74px;top:-1px;width:60px;height:23px;overflow:hidden">
<div class=t style="top:3px;font-size:12.10px;color:#000;left:0px;">Bank Transfer</div>
</div>
<div class=t style="top:2px;font-size:13.00px;color:#000;left:-392.5px;width:600px;text-align:right;">0.00</div>
<div class=t style="top:2px;font-size:13.00px;color:#000;left:-316.5px;width:600px;text-align:right;">250.00</div>
<div class=t style="top:2px;font-size:13.00px;color:#000;left:-219.5px;width:600px;text-align:right;">0</div>
<div class=a style="left:387px;top:-1px;width:276px;height:23px;overflow:hidden">
<div class=t style="top:3px;font-size:13.00px;color:#000;left:0px;">First Floor Highfield Road, Newington</div>
</div>
<div class=t style="top:2px;font-size:13.00px;color:#000;left:667px;">Deal Sheet receipt : Holding deposit received</div>
<svg class=a style="left:305px;top:2px" width="13" height="15" viewBox="0 0 13 15"><rect x="0.5" y="0.5" width="11.5" height="13.5" rx="2.5" fill="#fff" stroke="#8a8a8a"/><path d="M1.9,7.4 L3.3,6.7 L4.9,9.8 L11.7,1.5 L12.4,2.1 L5.1,12 L4.1,12 Z" fill="#000"/></svg>
<div class=a style="left:0;top:22px;width:934px;height:23px;background:#f9f9f9"></div>
<div class=t style="top:25px;font-size:13.00px;color:#000;left:3px;">11/08/2025</div>
<div class=a style="left:74px;top:22px;width:60px;height:23px;overflow:hidden">
<div class=t style="top:3px;font-size:12.10px;color:#000;left:0px;">Bank Transfer</div>
</div>
<div class=t style="top:25px;font-size:13.00px;color:#000;left:-392.5px;width:600px;text-align:right;">0.00</div>
<div class=t style="top:25px;font-size:13.00px;color:#000;left:-316.5px;width:600px;text-align:right;">-50.00</div>
<div class=t style="top:25px;font-size:13.00px;color:#000;left:-219.5px;width:600px;text-align:right;">0</div>
<div class=a style="left:387px;top:22px;width:276px;height:23px;overflow:hidden">
<div class=t style="top:3px;font-size:13.00px;color:#000;left:0px;">First Floor Highfield Road, Newington</div>
</div>
<div class=t style="top:25px;font-size:13.00px;color:#000;left:667px;">Returned to Tenant : Returned</div>
<svg class=a style="left:305px;top:25px" width="13" height="15" viewBox="0 0 13 15"><rect x="0.5" y="0.5" width="11.5" height="13.5" rx="2.5" fill="#fff" stroke="#8a8a8a"/><path d="M1.9,7.4 L3.3,6.7 L4.9,9.8 L11.7,1.5 L12.4,2.1 L5.1,12 L4.1,12 Z" fill="#000"/></svg>
<div class=a style="left:0;top:45px;width:934px;height:23px;background:#fff"></div>
<div class=t style="top:48px;font-size:13.00px;color:#000;left:3px;">21/08/2025</div>
<div class=a style="left:74px;top:45px;width:60px;height:23px;overflow:hidden">
<div class=t style="top:3px;font-size:12.10px;color:#000;left:0px;">Bank Transfer</div>
</div>
<div class=t style="top:48px;font-size:13.00px;color:#000;left:-392.5px;width:600px;text-align:right;">2140.00</div>
<div class=t style="top:48px;font-size:13.00px;color:#000;left:-316.5px;width:600px;text-align:right;">0.00</div>
<div class=t style="top:48px;font-size:13.00px;color:#000;left:-219.5px;width:600px;text-align:right;">0</div>
<div class=a style="left:387px;top:45px;width:276px;height:23px;overflow:hidden">
<div class=t style="top:3px;font-size:13.00px;color:#000;left:0px;">6 Maurys Ln</div>
</div>
<div class=t style="top:48px;font-size:13.00px;color:#000;left:667px;">Payment made to Landlord.</div>
<svg class=a style="left:305px;top:48px" width="13" height="15" viewBox="0 0 13 15"><rect x="0.5" y="0.5" width="11.5" height="13.5" rx="2.5" fill="#fff" stroke="#8a8a8a"/><path d="M1.9,7.4 L3.3,6.7 L4.9,9.8 L11.7,1.5 L12.4,2.1 L5.1,12 L4.1,12 Z" fill="#000"/></svg>
<div class=a style="left:0;top:68px;width:934px;height:23px;background:#f9f9f9"></div>
<div class=t style="top:71px;font-size:13.00px;color:#000;left:3px;">04/09/2025</div>
<div class=a style="left:74px;top:68px;width:60px;height:23px;overflow:hidden">
<div class=t style="top:3px;font-size:12.10px;color:#000;left:0px;">Bank Transfer</div>
</div>
<div class=t style="top:71px;font-size:13.00px;color:#000;left:-392.5px;width:600px;text-align:right;">555.00</div>
<div class=t style="top:71px;font-size:13.00px;color:#000;left:-316.5px;width:600px;text-align:right;">0.00</div>
<div class=t style="top:71px;font-size:13.00px;color:#000;left:-219.5px;width:600px;text-align:right;">0</div>
<div class=a style="left:387px;top:68px;width:276px;height:23px;overflow:hidden">
<div class=t style="top:3px;font-size:13.00px;color:#000;left:0px;">Front Flat Highfield Road, Newington</div>
</div>
<div class=t style="top:71px;font-size:13.00px;color:#000;left:667px;"></div>
<svg class=a style="left:305px;top:71px" width="13" height="15" viewBox="0 0 13 15"><rect x="0.5" y="0.5" width="11.5" height="13.5" rx="2.5" fill="#fff" stroke="#8a8a8a"/><path d="M1.9,7.4 L3.3,6.7 L4.9,9.8 L11.7,1.5 L12.4,2.1 L5.1,12 L4.1,12 Z" fill="#000"/></svg>
<div class=a style="left:0;top:91px;width:934px;height:23px;background:#fff"></div>
<div class=t style="top:94px;font-size:13.00px;color:#000;left:3px;">10/09/2025</div>
<div class=a style="left:74px;top:91px;width:60px;height:23px;overflow:hidden">
<div class=t style="top:3px;font-size:12.10px;color:#000;left:0px;">Bank Transfer</div>
</div>
<div class=t style="top:94px;font-size:13.00px;color:#000;left:-392.5px;width:600px;text-align:right;">45.00</div>
<div class=t style="top:94px;font-size:13.00px;color:#000;left:-316.5px;width:600px;text-align:right;">0.00</div>
<div class=t style="top:94px;font-size:13.00px;color:#000;left:-219.5px;width:600px;text-align:right;">0</div>
<div class=a style="left:387px;top:91px;width:276px;height:23px;overflow:hidden">
<div class=t style="top:3px;font-size:13.00px;color:#000;left:0px;">75 Church Lane</div>
</div>
<div class=t style="top:94px;font-size:13.00px;color:#000;left:667px;">room 1 bill</div>
<svg class=a style="left:305px;top:94px" width="13" height="15" viewBox="0 0 13 15"><rect x="0.5" y="0.5" width="11.5" height="13.5" rx="2.5" fill="#fff" stroke="#8a8a8a"/><path d="M1.9,7.4 L3.3,6.7 L4.9,9.8 L11.7,1.5 L12.4,2.1 L5.1,12 L4.1,12 Z" fill="#000"/></svg>
<div class=a style="left:0;top:114px;width:934px;height:23px;background:#f9f9f9"></div>
<div class=t style="top:117px;font-size:13.00px;color:#000;left:3px;">16/09/2025</div>
<div class=a style="left:74px;top:114px;width:60px;height:23px;overflow:hidden">
<div class=t style="top:3px;font-size:12.10px;color:#000;left:0px;">Bank Transfer</div>
</div>
<div class=t style="top:117px;font-size:13.00px;color:#000;left:-392.5px;width:600px;text-align:right;">0.00</div>
<div class=t style="top:117px;font-size:13.00px;color:#000;left:-316.5px;width:600px;text-align:right;">6000.00</div>
<div class=t style="top:117px;font-size:13.00px;color:#000;left:-219.5px;width:600px;text-align:right;">0</div>
<div class=a style="left:387px;top:114px;width:276px;height:23px;overflow:hidden">
<div class=t style="top:3px;font-size:13.00px;color:#000;left:0px;">Front Flat Highfield Road, Newington</div>
</div>
<div class=t style="top:117px;font-size:13.00px;color:#000;left:667px;">Rent Received :</div>
<svg class=a style="left:305px;top:117px" width="13" height="15" viewBox="0 0 13 15"><rect x="0.5" y="0.5" width="11.5" height="13.5" rx="2.5" fill="#fff" stroke="#8a8a8a"/><path d="M1.9,7.4 L3.3,6.7 L4.9,9.8 L11.7,1.5 L12.4,2.1 L5.1,12 L4.1,12 Z" fill="#000"/></svg>
<div class=a style="left:0;top:137px;width:934px;height:23px;background:#fff"></div>
<div class=t style="top:140px;font-size:13.00px;color:#000;left:3px;">16/09/2025</div>
<div class=a style="left:74px;top:137px;width:60px;height:23px;overflow:hidden">
<div class=t style="top:3px;font-size:12.10px;color:#000;left:0px;">Bank Transfer</div>
</div>
<div class=t style="top:140px;font-size:13.00px;color:#000;left:-392.5px;width:600px;text-align:right;">4725.00</div>
<div class=t style="top:140px;font-size:13.00px;color:#000;left:-316.5px;width:600px;text-align:right;">0.00</div>
<div class=t style="top:140px;font-size:13.00px;color:#000;left:-219.5px;width:600px;text-align:right;">0</div>
<div class=a style="left:387px;top:137px;width:276px;height:23px;overflow:hidden">
<div class=t style="top:3px;font-size:13.00px;color:#000;left:0px;">Front F Highfield Road</div>
</div>
<div class=t style="top:140px;font-size:13.00px;color:#000;left:667px;">Payment made to Landlord.</div>
<svg class=a style="left:305px;top:140px" width="13" height="15" viewBox="0 0 13 15"><rect x="0.5" y="0.5" width="11.5" height="13.5" rx="2.5" fill="#fff" stroke="#8a8a8a"/><path d="M1.9,7.4 L3.3,6.7 L4.9,9.8 L11.7,1.5 L12.4,2.1 L5.1,12 L4.1,12 Z" fill="#000"/></svg>
<div class=a style="left:0;top:160px;width:934px;height:23px;background:#f9f9f9"></div>
<div class=t style="top:163px;font-size:13.00px;color:#000;left:3px;">16/09/2025</div>
<div class=a style="left:74px;top:160px;width:60px;height:23px;overflow:hidden">
<div class=t style="top:3px;font-size:12.10px;color:#000;left:0px;">Bank Transfer</div>
</div>
<div class=t style="top:163px;font-size:13.00px;color:#000;left:-392.5px;width:600px;text-align:right;">0.00</div>
<div class=t style="top:163px;font-size:13.00px;color:#000;left:-316.5px;width:600px;text-align:right;">1.00</div>
<div class=t style="top:163px;font-size:13.00px;color:#000;left:-219.5px;width:600px;text-align:right;">0</div>
<div class=a style="left:387px;top:160px;width:276px;height:23px;overflow:hidden">
<div class=t style="top:3px;font-size:13.00px;color:#000;left:0px;">Room 3 64 Beacon Hill, CT6</div>
</div>
<div class=t style="top:163px;font-size:13.00px;color:#000;left:667px;">Rent Received :</div>
<svg class=a style="left:305px;top:163px" width="13" height="15" viewBox="0 0 13 15"><rect x="0.5" y="0.5" width="11.5" height="13.5" rx="2.5" fill="#fff" stroke="#8a8a8a"/><path d="M1.9,7.4 L3.3,6.7 L4.9,9.8 L11.7,1.5 L12.4,2.1 L5.1,12 L4.1,12 Z" fill="#000"/></svg>
<div class=a style="left:0;top:183px;width:934px;height:23px;background:#fff"></div>
<div class=t style="top:186px;font-size:13.00px;color:#000;left:3px;">17/09/2025</div>
<div class=a style="left:74px;top:183px;width:60px;height:23px;overflow:hidden">
<div class=t style="top:3px;font-size:12.10px;color:#000;left:0px;">Bank Transfer</div>
</div>
<div class=t style="top:186px;font-size:13.00px;color:#000;left:-392.5px;width:600px;text-align:right;">125.00</div>
<div class=t style="top:186px;font-size:13.00px;color:#000;left:-316.5px;width:600px;text-align:right;">0.00</div>
<div class=t style="top:186px;font-size:13.00px;color:#000;left:-219.5px;width:600px;text-align:right;">0</div>
<div class=a style="left:387px;top:183px;width:276px;height:23px;overflow:hidden">
<div class=t style="top:3px;font-size:13.00px;color:#000;left:0px;">Room 2, 75 Church Lane, Example Town</div>
</div>
<div class=t style="top:186px;font-size:13.00px;color:#000;left:667px;">Repair work</div>
<svg class=a style="left:305px;top:186px" width="13" height="15" viewBox="0 0 13 15"><rect x="0.5" y="0.5" width="11.5" height="13.5" rx="2.5" fill="#fff" stroke="#8a8a8a"/><path d="M1.9,7.4 L3.3,6.7 L4.9,9.8 L11.7,1.5 L12.4,2.1 L5.1,12 L4.1,12 Z" fill="#000"/></svg>
<div class=a style="left:0;top:206px;width:934px;height:23px;background:#f9f9f9"></div>
<div class=t style="top:209px;font-size:13.00px;color:#000;left:3px;">17/09/2025</div>
<div class=a style="left:74px;top:206px;width:60px;height:23px;overflow:hidden">
<div class=t style="top:3px;font-size:12.10px;color:#000;left:0px;">Bank Transfer</div>
</div>
<div class=t style="top:209px;font-size:13.00px;color:#000;left:-392.5px;width:600px;text-align:right;">220.00</div>
<div class=t style="top:209px;font-size:13.00px;color:#000;left:-316.5px;width:600px;text-align:right;">0.00</div>
<div class=t style="top:209px;font-size:13.00px;color:#000;left:-219.5px;width:600px;text-align:right;">0</div>
<div class=a style="left:387px;top:206px;width:276px;height:23px;overflow:hidden">
<div class=t style="top:3px;font-size:13.00px;color:#000;left:0px;">88 Minnis Drive, Birchington</div>
</div>
<div class=t style="top:209px;font-size:13.00px;color:#000;left:667px;">Repair work</div>
<svg class=a style="left:305px;top:209px" width="13" height="15" viewBox="0 0 13 15"><rect x="0.5" y="0.5" width="11.5" height="13.5" rx="2.5" fill="#fff" stroke="#8a8a8a"/><path d="M1.9,7.4 L3.3,6.7 L4.9,9.8 L11.7,1.5 L12.4,2.1 L5.1,12 L4.1,12 Z" fill="#000"/></svg>
<div class=a style="left:0;top:229px;width:934px;height:23px;background:#fff"></div>
<div class=t style="top:232px;font-size:13.00px;color:#000;left:3px;">09/10/2025</div>
<div class=a style="left:74px;top:229px;width:60px;height:23px;overflow:hidden">
<div class=t style="top:3px;font-size:12.10px;color:#000;left:0px;">Bank Transfer</div>
</div>
<div class=t style="top:232px;font-size:13.00px;color:#000;left:-392.5px;width:600px;text-align:right;">50.00</div>
<div class=t style="top:232px;font-size:13.00px;color:#000;left:-316.5px;width:600px;text-align:right;">0.00</div>
<div class=t style="top:232px;font-size:13.00px;color:#000;left:-219.5px;width:600px;text-align:right;">0</div>
<div class=a style="left:387px;top:229px;width:276px;height:23px;overflow:hidden">
<div class=t style="top:3px;font-size:13.00px;color:#000;left:0px;">Apt 302, Kedleston Building 51 Lodge Lane, Derby</div>
</div>
<div class=t style="top:232px;font-size:13.00px;color:#000;left:667px;">Repair work</div>
<svg class=a style="left:305px;top:232px" width="13" height="15" viewBox="0 0 13 15"><rect x="0.5" y="0.5" width="11.5" height="13.5" rx="2.5" fill="#fff" stroke="#8a8a8a"/><path d="M1.9,7.4 L3.3,6.7 L4.9,9.8 L11.7,1.5 L12.4,2.1 L5.1,12 L4.1,12 Z" fill="#000"/></svg>
<div class=a style="left:0;top:252px;width:934px;height:23px;background:#f9f9f9"></div>
<div class=t style="top:255px;font-size:13.00px;color:#000;left:3px;">09/10/2025</div>
<div class=a style="left:74px;top:252px;width:60px;height:23px;overflow:hidden">
<div class=t style="top:3px;font-size:12.10px;color:#000;left:0px;">Bank Transfer</div>
</div>
<div class=t style="top:255px;font-size:13.00px;color:#000;left:-392.5px;width:600px;text-align:right;">0.00</div>
<div class=t style="top:255px;font-size:13.00px;color:#000;left:-316.5px;width:600px;text-align:right;">1200.00</div>
<div class=t style="top:255px;font-size:13.00px;color:#000;left:-219.5px;width:600px;text-align:right;">0</div>
<div class=a style="left:387px;top:252px;width:276px;height:23px;overflow:hidden">
<div class=t style="top:3px;font-size:13.00px;color:#000;left:0px;">Apt 302, Kedleston Building 51 Lodge Lane, Derby</div>
</div>
<div class=t style="top:255px;font-size:13.00px;color:#000;left:667px;">Rent Received :</div>
<svg class=a style="left:305px;top:255px" width="13" height="15" viewBox="0 0 13 15"><rect x="0.5" y="0.5" width="11.5" height="13.5" rx="2.5" fill="#fff" stroke="#8a8a8a"/><path d="M1.9,7.4 L3.3,6.7 L4.9,9.8 L11.7,1.5 L12.4,2.1 L5.1,12 L4.1,12 Z" fill="#000"/></svg>
<div class=a style="left:0;top:275px;width:934px;height:23px;background:#fff"></div>
<div class=t style="top:278px;font-size:13.00px;color:#000;left:3px;">09/10/2025</div>
<div class=a style="left:74px;top:275px;width:60px;height:23px;overflow:hidden">
<div class=t style="top:3px;font-size:12.10px;color:#000;left:0px;">Bank Transfer</div>
</div>
<div class=t style="top:278px;font-size:13.00px;color:#000;left:-392.5px;width:600px;text-align:right;">690.00</div>
<div class=t style="top:278px;font-size:13.00px;color:#000;left:-316.5px;width:600px;text-align:right;">0.00</div>
<div class=t style="top:278px;font-size:13.00px;color:#000;left:-219.5px;width:600px;text-align:right;">0</div>
<div class=a style="left:387px;top:275px;width:276px;height:23px;overflow:hidden">
<div class=t style="top:3px;font-size:13.00px;color:#000;left:0px;">Apt 302, Kedleston Building 51 Lodge Lane</div>
</div>
<div class=t style="top:278px;font-size:13.00px;color:#000;left:667px;">Payment made to Landlord.</div>
<svg class=a style="left:305px;top:278px" width="13" height="15" viewBox="0 0 13 15"><rect x="0.5" y="0.5" width="11.5" height="13.5" rx="2.5" fill="#fff" stroke="#8a8a8a"/><path d="M1.9,7.4 L3.3,6.7 L4.9,9.8 L11.7,1.5 L12.4,2.1 L5.1,12 L4.1,12 Z" fill="#000"/></svg>
<div class=a style="left:0;top:298px;width:934px;height:23px;background:#f9f9f9"></div>
<div class=t style="top:301px;font-size:13.00px;color:#000;left:3px;">10/10/2025</div>
<div class=a style="left:74px;top:298px;width:60px;height:23px;overflow:hidden">
<div class=t style="top:3px;font-size:12.10px;color:#000;left:0px;">Bank Transfer</div>
</div>
<div class=t style="top:301px;font-size:13.00px;color:#000;left:-392.5px;width:600px;text-align:right;">0.00</div>
<div class=t style="top:301px;font-size:13.00px;color:#000;left:-316.5px;width:600px;text-align:right;">50.00</div>
<div class=t style="top:301px;font-size:13.00px;color:#000;left:-219.5px;width:600px;text-align:right;">0</div>
<div class=a style="left:387px;top:298px;width:276px;height:23px;overflow:hidden">
<div class=t style="top:3px;font-size:13.00px;color:#000;left:0px;">Apt 302, Kedleston Building 51 Lodge Lane, Derby</div>
</div>
<div class=t style="top:301px;font-size:13.00px;color:#000;left:667px;">Rent Received :</div>
<svg class=a style="left:305px;top:301px" width="13" height="15" viewBox="0 0 13 15"><rect x="0.5" y="0.5" width="11.5" height="13.5" rx="2.5" fill="#fff" stroke="#8a8a8a"/><path d="M1.9,7.4 L3.3,6.7 L4.9,9.8 L11.7,1.5 L12.4,2.1 L5.1,12 L4.1,12 Z" fill="#000"/></svg>
<div class=a style="left:0;top:321px;width:934px;height:23px;background:#fff"></div>
<div class=t style="top:324px;font-size:13.00px;color:#000;left:3px;">11/10/2025</div>
<div class=a style="left:74px;top:321px;width:60px;height:23px;overflow:hidden">
<div class=t style="top:3px;font-size:12.10px;color:#000;left:0px;">Bank Transfer</div>
</div>
<div class=t style="top:324px;font-size:13.00px;color:#000;left:-392.5px;width:600px;text-align:right;">0.00</div>
<div class=t style="top:324px;font-size:13.00px;color:#000;left:-316.5px;width:600px;text-align:right;">10.00</div>
<div class=t style="top:324px;font-size:13.00px;color:#000;left:-219.5px;width:600px;text-align:right;">0</div>
<div class=a style="left:387px;top:321px;width:276px;height:23px;overflow:hidden">
<div class=t style="top:3px;font-size:13.00px;color:#000;left:0px;">Room 2, 75 Church Lane, Example Town</div>
</div>
<div class=t style="top:324px;font-size:13.00px;color:#000;left:667px;">Rent Received :</div>
<svg class=a style="left:305px;top:324px" width="13" height="15" viewBox="0 0 13 15"><rect x="0.5" y="0.5" width="11.5" height="13.5" rx="2.5" fill="#fff" stroke="#8a8a8a"/><path d="M1.9,7.4 L3.3,6.7 L4.9,9.8 L11.7,1.5 L12.4,2.1 L5.1,12 L4.1,12 Z" fill="#000"/></svg>
<div class=a style="left:0;top:344px;width:934px;height:23px;background:#f9f9f9"></div>
<div class=t style="top:347px;font-size:13.00px;color:#000;left:3px;">12/10/2025</div>
<div class=a style="left:74px;top:344px;width:60px;height:23px;overflow:hidden">
<div class=t style="top:3px;font-size:12.10px;color:#000;left:0px;">Bank Transfer</div>
</div>
<div class=t style="top:347px;font-size:13.00px;color:#000;left:-392.5px;width:600px;text-align:right;">0.00</div>
<div class=t style="top:347px;font-size:13.00px;color:#000;left:-316.5px;width:600px;text-align:right;">50.00</div>
<div class=t style="top:347px;font-size:13.00px;color:#000;left:-219.5px;width:600px;text-align:right;">0</div>
<div class=a style="left:387px;top:344px;width:276px;height:23px;overflow:hidden">
<div class=t style="top:3px;font-size:13.00px;color:#000;left:0px;">24 Main Road, Example Town</div>
</div>
<div class=t style="top:347px;font-size:13.00px;color:#000;left:667px;">Rent Received :</div>
<svg class=a style="left:305px;top:347px" width="13" height="15" viewBox="0 0 13 15"><rect x="0.5" y="0.5" width="11.5" height="13.5" rx="2.5" fill="#fff" stroke="#8a8a8a"/><path d="M1.9,7.4 L3.3,6.7 L4.9,9.8 L11.7,1.5 L12.4,2.1 L5.1,12 L4.1,12 Z" fill="#000"/></svg>
<div class=a style="left:0;top:367px;width:934px;height:23px;background:#fff"></div>
<div class=t style="top:370px;font-size:13.00px;color:#000;left:3px;">16/10/2025</div>
<div class=a style="left:74px;top:367px;width:60px;height:23px;overflow:hidden">
<div class=t style="top:3px;font-size:12.10px;color:#000;left:0px;">Bank Transfer</div>
</div>
<div class=t style="top:370px;font-size:13.00px;color:#000;left:-392.5px;width:600px;text-align:right;">0.00</div>
<div class=t style="top:370px;font-size:13.00px;color:#000;left:-316.5px;width:600px;text-align:right;">2000.00</div>
<div class=t style="top:370px;font-size:13.00px;color:#000;left:-219.5px;width:600px;text-align:right;">0</div>
<div class=a style="left:387px;top:367px;width:276px;height:23px;overflow:hidden">
<div class=t style="top:3px;font-size:13.00px;color:#000;left:0px;">22 The Halt, CT5</div>
</div>
<div class=t style="top:370px;font-size:13.00px;color:#000;left:667px;">Rent Received :</div>
<svg class=a style="left:305px;top:370px" width="13" height="15" viewBox="0 0 13 15"><rect x="0.5" y="0.5" width="11.5" height="13.5" rx="2.5" fill="#fff" stroke="#8a8a8a"/><path d="M1.9,7.4 L3.3,6.7 L4.9,9.8 L11.7,1.5 L12.4,2.1 L5.1,12 L4.1,12 Z" fill="#000"/></svg>
<div class=a style="left:0;top:390px;width:934px;height:23px;background:#0078d7"></div>
<div class=t style="top:393px;font-size:13.00px;color:#fff;left:3px;">20/10/2025</div>
<div class=a style="left:74px;top:390px;width:60px;height:23px;overflow:hidden">
<div class=t style="top:3px;font-size:12.10px;color:#fff;left:0px;">Bank Transfer</div>
</div>
<div class=t style="top:393px;font-size:13.00px;color:#fff;left:-392.5px;width:600px;text-align:right;">1760.00</div>
<div class=t style="top:393px;font-size:13.00px;color:#fff;left:-316.5px;width:600px;text-align:right;">0.00</div>
<div class=t style="top:393px;font-size:13.00px;color:#fff;left:-219.5px;width:600px;text-align:right;">0</div>
<div class=a style="left:387px;top:390px;width:276px;height:23px;overflow:hidden">
<div class=t style="top:3px;font-size:13.00px;color:#fff;left:0px;">22 The Halt</div>
</div>
<div class=t style="top:393px;font-size:13.00px;color:#fff;left:667px;">Payment made to Landlord.</div>
<svg class=a style="left:305px;top:393px" width="13" height="15" viewBox="0 0 13 15"><rect x="0.5" y="0.5" width="11.5" height="13.5" rx="2.5" fill="#fff" stroke="#fff"/></svg>
<div class=a style="left:0;top:413px;width:934px;height:23px;background:#fff"></div>
<div class=t style="top:416px;font-size:13.00px;color:#a9a9a9;left:3px;">10/11/2025</div>
<div class=a style="left:74px;top:413px;width:60px;height:23px;overflow:hidden">
<div class=t style="top:3px;font-size:12.10px;color:#a9a9a9;left:0px;">Bank Transfer</div>
</div>
<div class=t style="top:416px;font-size:13.00px;color:#a9a9a9;left:-392.5px;width:600px;text-align:right;">0.00</div>
<div class=t style="top:416px;font-size:13.00px;color:#a9a9a9;left:-316.5px;width:600px;text-align:right;">950.00</div>
<div class=t style="top:416px;font-size:13.00px;color:#a9a9a9;left:-219.5px;width:600px;text-align:right;">0</div>
<div class=a style="left:387px;top:413px;width:276px;height:23px;overflow:hidden">
<div class=t style="top:3px;font-size:13.00px;color:#a9a9a9;left:0px;">Room 4 64 Beacon Hill, CT6</div>
</div>
<div class=t style="top:416px;font-size:13.00px;color:#a9a9a9;left:667px;">Rent Received :</div>
<svg class=a style="left:305px;top:416px" width="13" height="15" viewBox="0 0 13 15"><rect x="0.5" y="0.5" width="11.5" height="13.5" rx="2.5" fill="#fff" stroke="#8a8a8a"/></svg>
<div class=a style="left:0;top:436px;width:934px;height:23px;background:#f9f9f9"></div>
<div class=t style="top:439px;font-size:13.00px;color:#a9a9a9;left:3px;">16/11/2025</div>
<div class=a style="left:74px;top:436px;width:60px;height:23px;overflow:hidden">
<div class=t style="top:3px;font-size:12.10px;color:#a9a9a9;left:0px;">Bank Transfer</div>
</div>
<div class=t style="top:439px;font-size:13.00px;color:#a9a9a9;left:-392.5px;width:600px;text-align:right;">0.00</div>
<div class=t style="top:439px;font-size:13.00px;color:#a9a9a9;left:-316.5px;width:600px;text-align:right;">500.00</div>
<div class=t style="top:439px;font-size:13.00px;color:#a9a9a9;left:-219.5px;width:600px;text-align:right;">0</div>
<div class=a style="left:387px;top:436px;width:276px;height:23px;overflow:hidden">
<div class=t style="top:3px;font-size:13.00px;color:#a9a9a9;left:0px;">28 Simon Ave, Cliftonville</div>
</div>
<div class=t style="top:439px;font-size:13.00px;color:#a9a9a9;left:667px;">Deal Sheet receipt :</div>
<svg class=a style="left:305px;top:439px" width="13" height="15" viewBox="0 0 13 15"><rect x="0.5" y="0.5" width="11.5" height="13.5" rx="2.5" fill="#fff" stroke="#8a8a8a"/></svg>
<div class=a style="left:0;top:459px;width:934px;height:23px;background:#fff"></div>
<div class=t style="top:462px;font-size:13.00px;color:#a9a9a9;left:3px;">16/11/2025</div>
<div class=a style="left:74px;top:459px;width:60px;height:23px;overflow:hidden">
<div class=t style="top:3px;font-size:12.10px;color:#a9a9a9;left:0px;">Bank Transfer</div>
</div>
<div class=t style="top:462px;font-size:13.00px;color:#a9a9a9;left:-392.5px;width:600px;text-align:right;">0.00</div>
<div class=t style="top:462px;font-size:13.00px;color:#a9a9a9;left:-316.5px;width:600px;text-align:right;">500.00</div>
<div class=t style="top:462px;font-size:13.00px;color:#a9a9a9;left:-219.5px;width:600px;text-align:right;">0</div>
<div class=a style="left:387px;top:459px;width:276px;height:23px;overflow:hidden">
<div class=t style="top:3px;font-size:13.00px;color:#a9a9a9;left:0px;">46 Omer Ave, Cliftonville</div>
</div>
<div class=t style="top:462px;font-size:13.00px;color:#a9a9a9;left:667px;">Deal Sheet receipt : Holding deposit</div>
<svg class=a style="left:305px;top:462px" width="13" height="15" viewBox="0 0 13 15"><rect x="0.5" y="0.5" width="11.5" height="13.5" rx="2.5" fill="#fff" stroke="#8a8a8a"/></svg>
<div class=a style="left:0;top:482px;width:934px;height:23px;background:#f9f9f9"></div>
<div class=t style="top:485px;font-size:13.00px;color:#a9a9a9;left:3px;">16/11/2025</div>
<div class=a style="left:74px;top:482px;width:60px;height:23px;overflow:hidden">
<div class=t style="top:3px;font-size:12.10px;color:#a9a9a9;left:0px;">Bank Transfer</div>
</div>
<div class=t style="top:485px;font-size:13.00px;color:#a9a9a9;left:-392.5px;width:600px;text-align:right;">0.00</div>
<div class=t style="top:485px;font-size:13.00px;color:#a9a9a9;left:-316.5px;width:600px;text-align:right;">1865.38</div>
<div class=t style="top:485px;font-size:13.00px;color:#a9a9a9;left:-219.5px;width:600px;text-align:right;">0</div>
<div class=a style="left:387px;top:482px;width:276px;height:23px;overflow:hidden">
<div class=t style="top:3px;font-size:13.00px;color:#a9a9a9;left:0px;">46 Omer Ave, Cliftonville</div>
</div>
<div class=t style="top:485px;font-size:13.00px;color:#a9a9a9;left:667px;">Deal Sheet receipt :</div>
<svg class=a style="left:305px;top:485px" width="13" height="15" viewBox="0 0 13 15"><rect x="0.5" y="0.5" width="11.5" height="13.5" rx="2.5" fill="#fff" stroke="#8a8a8a"/></svg>
</div>
<div class=t style="top:818px;font-size:11.62px;color:#000;left:-43.5px;width:600px;text-align:right;">Total :</div>
<div class=t style="top:842px;font-size:11.45px;color:#000;left:-43.5px;width:600px;text-align:right;">Reconciled :</div>
<div class=t style="top:865px;font-size:11.65px;color:#000;left:-43.5px;width:600px;text-align:right;">Unreconciled :</div>
<div class=t style="top:818px;font-size:10.58px;color:#000;font-weight:700;left:46.5px;width:600px;text-align:right;">£79700.50</div>
<div class=t style="top:842px;font-size:10.58px;color:#000;font-weight:700;left:46.5px;width:600px;text-align:right;">£77940.50</div>
<div class=t style="top:865px;font-size:10.55px;color:#000;font-weight:700;left:46.5px;width:600px;text-align:right;">£1760.00</div>
<div class=t style="top:818px;font-size:10.90px;color:#000;font-weight:700;left:127px;width:600px;text-align:right;">£131124.76</div>
<div class=t style="top:842px;font-size:10.90px;color:#000;font-weight:700;left:127px;width:600px;text-align:right;">£131124.76</div>
<div class=t style="top:865px;font-size:10.79px;color:#000;font-weight:700;left:127px;width:600px;text-align:right;">£0.00</div>
<div class=a style="left:914px;top:841px;width:87px;height:39px;border:1px solid #dcdcdc"></div>
<div class=a style="left:922px;top:848px;width:32px;height:25px;background:#f9f9f9;border-radius:4px"></div>
<div class=a style="left:962px;top:848px;width:32px;height:25px;background:#f9f9f9;border-radius:4px"></div>
<div class=a style="left:1140px;top:848px;width:65px;height:25px;background:#fdfdfd;border:1px solid #d0d0d0;border-bottom-color:#bdbdbd;border-radius:4px"></div>
<div class=t style="top:852px;font-size:10.93px;color:#000;left:1174px;">Pause</div>
<div class=a style="left:1256px;top:834px;width:72px;height:38px;background:#fdfdfd;border:1px solid #d0d0d0;border-bottom-color:#bdbdbd;border-radius:4px"></div>
<div class=a style="left:1336px;top:834px;width:72px;height:38px;background:#fdfdfd;border:1px solid #d0d0d0;border-bottom-color:#bdbdbd;border-radius:4px"></div>
<div class=t style="top:845px;font-size:11.77px;color:#000;left:1301px;">OK</div>
<div class=t style="top:845px;font-size:11.24px;color:#000;left:1371px;">Cancel</div>
<svg class=a style="left:16px;top:60px" width="32" height="32" viewBox="0 0 32 32"><path d="M1,9.2 L15,1 L29,9.2" fill="none" stroke="#333" stroke-width="1.3" stroke-linejoin="round"/><rect x="0.3" y="8.4" width="29.4" height="1.8" rx="0.6" fill="#333"/><circle cx="15" cy="5.8" r="1.5" fill="none" stroke="#333" stroke-width="0.9"/><path d="M4,10.3 v1.3 h4.2 v-1.3 M4.7,11.8 V23.2 M7.6,11.8 V23.2 M3.8,25 v-1.6 h4.6 v1.6" fill="none" stroke="#333" stroke-width="1.1"/><path d="M22.2,10.3 v1.3 h4.2 v-1.3 M22.8,11.8 V15.5 M25.7,11.8 V15.5" fill="none" stroke="#333" stroke-width="1.1"/><path d="M12,24.8 V14.6 H18.3 V17" fill="none" stroke="#e8791e" stroke-width="1.1"/><path d="M3.2,25.5 H15.5 M1.8,27.5 H15.8 M0.6,29.6 H16.8 M3.2,25.5 v2 M1.8,27.5 v2.1" fill="none" stroke="#333" stroke-width="1.1"/><circle cx="24.6" cy="24.3" r="8.9" fill="#fff"/><circle cx="24.6" cy="24.3" r="7.3" fill="#75b3e2" stroke="#1a6dc0" stroke-width="1.1"/><path d="M24.6,29.400000000000002 V19.0 M21.3,22.0 L24.6,19.0 L27.900000000000002,22.0" fill="none" stroke="#fff" stroke-width="1.1"/></svg><svg class=a style="left:79px;top:60px" width="32" height="32" viewBox="0 0 32 32"><path d="M1,9.2 L15,1 L29,9.2" fill="none" stroke="#333" stroke-width="1.3" stroke-linejoin="round"/><rect x="0.3" y="8.4" width="29.4" height="1.8" rx="0.6" fill="#333"/><circle cx="15" cy="5.8" r="1.5" fill="none" stroke="#333" stroke-width="0.9"/><path d="M4,10.3 v1.3 h4.2 v-1.3 M4.7,11.8 V23.2 M7.6,11.8 V23.2 M3.8,25 v-1.6 h4.6 v1.6" fill="none" stroke="#333" stroke-width="1.1"/><path d="M22.2,10.3 v1.3 h4.2 v-1.3 M22.8,11.8 V15.5 M25.7,11.8 V15.5" fill="none" stroke="#333" stroke-width="1.1"/><path d="M12,24.8 V14.6 H18.3 V17" fill="none" stroke="#e8791e" stroke-width="1.1"/><path d="M3.2,25.5 H15.5 M1.8,27.5 H15.8 M0.6,29.6 H16.8 M3.2,25.5 v2 M1.8,27.5 v2.1" fill="none" stroke="#333" stroke-width="1.1"/><circle cx="24.6" cy="24.3" r="8.9" fill="#fff"/><circle cx="24.6" cy="24.3" r="7.3" fill="#75b3e2" stroke="#1a6dc0" stroke-width="1.1"/><path d="M24.6,19.2 V29.6 M21.3,26.6 L24.6,29.6 L27.900000000000002,26.6" fill="none" stroke="#fff" stroke-width="1.1"/></svg><svg class=a style="left:173px;top:60.5px" width="32" height="32" viewBox="0 0 32 32"><g transform="translate(14,0.5) scale(1.0)"><path d="M-0.5,5.5 L8,-0.5 L16.5,5.5 V16.5 H-0.5 Z" fill="#fff"/><path d="M1,5 L8,1 L15,5" fill="none" stroke="#333" stroke-width="1"/><rect x="0.4" y="4.6" width="15.2" height="1.3" fill="#333"/><ellipse cx="8" cy="3.6" rx="0.9" ry="0.6" fill="none" stroke="#333" stroke-width="0.6"/><path d="M2.8,6 V13 M4.6,6 V13 M11.4,6 V13 M13.2,6 V13" stroke="#333" stroke-width="0.9"/><path d="M6.6,13 V8.2 H9.4 V13" fill="none" stroke="#e8791e" stroke-width="0.9"/><path d="M1.8,13.8 H14.2 V15.3 H1.8 Z" fill="none" stroke="#333" stroke-width="0.9"/><rect x="0.5" y="15" width="15" height="0.9" fill="#333"/></g><g transform="translate(0,14.5) scale(1.0)"><path d="M-0.5,5.5 L8,-0.5 L16.5,5.5 V16.5 H-0.5 Z" fill="#fff"/><path d="M1,5 L8,1 L15,5" fill="none" stroke="#333" stroke-width="1"/><rect x="0.4" y="4.6" width="15.2" height="1.3" fill="#333"/><ellipse cx="8" cy="3.6" rx="0.9" ry="0.6" fill="none" stroke="#333" stroke-width="0.6"/><path d="M2.8,6 V13 M4.6,6 V13 M11.4,6 V13 M13.2,6 V13" stroke="#333" stroke-width="0.9"/><path d="M6.6,13 V8.2 H9.4 V13" fill="none" stroke="#e8791e" stroke-width="0.9"/><path d="M1.8,13.8 H14.2 V15.3 H1.8 Z" fill="none" stroke="#333" stroke-width="0.9"/><rect x="0.5" y="15" width="15" height="0.9" fill="#333"/></g><path d="M11.6,3.5 H7.3 Q5.5,3.5 5.5,5.3 V12" fill="none" stroke="#e8353a" stroke-width="1.1"/><path d="M3.2,9.8 L5.5,12.2 L7.8,9.8" fill="none" stroke="#e8353a" stroke-width="1.1"/></svg><svg class=a style="left:386px;top:60px" width="33" height="33" viewBox="0 0 33 33"><path d="M1,9.2 L15,1 L29,9.2" fill="none" stroke="#333" stroke-width="1.3" stroke-linejoin="round"/><rect x="0.3" y="8.4" width="29.4" height="1.8" rx="0.6" fill="#333"/><circle cx="15" cy="5.8" r="1.5" fill="none" stroke="#333" stroke-width="0.9"/><path d="M4,10.3 v1.3 h4.2 v-1.3 M4.7,11.8 V23.2 M7.6,11.8 V23.2 M3.8,25 v-1.6 h4.6 v1.6" fill="none" stroke="#333" stroke-width="1.1"/><path d="M22.2,10.3 v1.3 h4.2 v-1.3 M22.8,11.8 V15.5 M25.7,11.8 V15.5" fill="none" stroke="#333" stroke-width="1.1"/><path d="M12,24.8 V14.6 H18.3 V17" fill="none" stroke="#e8791e" stroke-width="1.1"/><path d="M3.2,25.5 H15.5 M1.8,27.5 H15.8 M0.6,29.6 H16.8 M3.2,25.5 v2 M1.8,27.5 v2.1" fill="none" stroke="#333" stroke-width="1.1"/><rect x="17" y="17" width="16" height="16" fill="#fff"/><rect x="18.6" y="19" width="13.5" height="13" fill="#fff" stroke="#333" stroke-width="1.1"/><rect x="19.3" y="19.7" width="12.1" height="2.2" fill="#cfcfcf"/><path d="M19,22.5 H32 M19,25.7 H32 M19,29 H32 M23,22.5 V32 M27.4,22.5 V32" stroke="#777" stroke-width="0.9"/></svg><svg class=a style="left:441px;top:60px" width="32" height="32" viewBox="0 0 32 32"><path d="M1,9.2 L15,1 L29,9.2" fill="none" stroke="#333" stroke-width="1.3" stroke-linejoin="round"/><rect x="0.3" y="8.4" width="29.4" height="1.8" rx="0.6" fill="#333"/><circle cx="15" cy="5.8" r="1.5" fill="none" stroke="#333" stroke-width="0.9"/><path d="M4,10.3 v1.3 h4.2 v-1.3 M4.7,11.8 V23.2 M7.6,11.8 V23.2 M3.8,25 v-1.6 h4.6 v1.6" fill="none" stroke="#333" stroke-width="1.1"/><path d="M22.2,10.3 v1.3 h4.2 v-1.3 M22.8,11.8 V15.5 M25.7,11.8 V15.5" fill="none" stroke="#333" stroke-width="1.1"/><path d="M12,24.8 V14.6 H18.3 V17" fill="none" stroke="#e8791e" stroke-width="1.1"/><path d="M3.2,25.5 H15.5 M1.8,27.5 H15.8 M0.6,29.6 H16.8 M3.2,25.5 v2 M1.8,27.5 v2.1" fill="none" stroke="#333" stroke-width="1.1"/><circle cx="24.6" cy="24.3" r="8.9" fill="#fff"/><circle cx="24.6" cy="24.3" r="7.3" fill="#8ccf9d" stroke="#17a24a" stroke-width="1.1"/><path d="M20.6,24.6 L23.6,27.5 L28.900000000000002,21.5" fill="none" stroke="#fff" stroke-width="1.2"/></svg><svg class=a style="left:534px;top:60.5px" width="32" height="32" viewBox="0 0 32 32"><g transform="translate(14,0.5) scale(1.0)"><path d="M-0.5,5.5 L8,-0.5 L16.5,5.5 V16.5 H-0.5 Z" fill="#fff"/><path d="M1,5 L8,1 L15,5" fill="none" stroke="#333" stroke-width="1"/><rect x="0.4" y="4.6" width="15.2" height="1.3" fill="#333"/><ellipse cx="8" cy="3.6" rx="0.9" ry="0.6" fill="none" stroke="#333" stroke-width="0.6"/><path d="M2.8,6 V13 M4.6,6 V13 M11.4,6 V13 M13.2,6 V13" stroke="#333" stroke-width="0.9"/><path d="M6.6,13 V8.2 H9.4 V13" fill="none" stroke="#e8791e" stroke-width="0.9"/><path d="M1.8,13.8 H14.2 V15.3 H1.8 Z" fill="none" stroke="#333" stroke-width="0.9"/><rect x="0.5" y="15" width="15" height="0.9" fill="#333"/></g><g transform="translate(0,14.5) scale(1.0)"><path d="M-0.5,5.5 L8,-0.5 L16.5,5.5 V16.5 H-0.5 Z" fill="#fff"/><path d="M1,5 L8,1 L15,5" fill="none" stroke="#333" stroke-width="1"/><rect x="0.4" y="4.6" width="15.2" height="1.3" fill="#333"/><ellipse cx="8" cy="3.6" rx="0.9" ry="0.6" fill="none" stroke="#333" stroke-width="0.6"/><path d="M2.8,6 V13 M4.6,6 V13 M11.4,6 V13 M13.2,6 V13" stroke="#333" stroke-width="0.9"/><path d="M6.6,13 V8.2 H9.4 V13" fill="none" stroke="#e8791e" stroke-width="0.9"/><path d="M1.8,13.8 H14.2 V15.3 H1.8 Z" fill="none" stroke="#333" stroke-width="0.9"/><rect x="0.5" y="15" width="15" height="0.9" fill="#333"/></g><path d="M11.6,3.5 H7.3 Q5.5,3.5 5.5,5.3 V12" fill="none" stroke="#2a88d8" stroke-width="1.1"/><path d="M3.2,9.8 L5.5,12.2 L7.8,9.8" fill="none" stroke="#2a88d8" stroke-width="1.1"/><path d="M18,29.5 H22.5 Q24.5,29.5 24.5,27.5 V21" fill="none" stroke="#2a88d8" stroke-width="1.1"/><path d="M22.2,23.2 L24.5,20.8 L26.8,23.2" fill="none" stroke="#2a88d8" stroke-width="1.1"/></svg><svg class=a style="left:607px;top:60px" width="34" height="34" viewBox="0 0 34 34"><path d="M1,9.2 L15,1 L29,9.2" fill="none" stroke="#333" stroke-width="1.3" stroke-linejoin="round"/><rect x="0.3" y="8.4" width="29.4" height="1.8" rx="0.6" fill="#333"/><circle cx="15" cy="5.8" r="1.5" fill="none" stroke="#333" stroke-width="0.9"/><path d="M4,10.3 v1.3 h4.2 v-1.3 M4.7,11.8 V23.2 M7.6,11.8 V23.2 M3.8,25 v-1.6 h4.6 v1.6" fill="none" stroke="#333" stroke-width="1.1"/><path d="M22.2,10.3 v1.3 h4.2 v-1.3 M22.8,11.8 V15.5 M25.7,11.8 V15.5" fill="none" stroke="#333" stroke-width="1.1"/><path d="M12,24.8 V14.6 H18.3 V17" fill="none" stroke="#e8791e" stroke-width="1.1"/><path d="M3.2,25.5 H15.5 M1.8,27.5 H15.8 M0.6,29.6 H16.8 M3.2,25.5 v2 M1.8,27.5 v2.1" fill="none" stroke="#333" stroke-width="1.1"/><circle cx="25.3" cy="24.3" r="8.4" fill="#fff"/><circle cx="25.3" cy="24.3" r="7" fill="#fff" stroke="#333" stroke-width="1.2"/><path d="M24.8,18.9 V24.8 L28.2,28.4" fill="none" stroke="#2a88d8" stroke-width="1.1"/></svg><svg class=a style="left:668px;top:60px" width="32" height="32" viewBox="0 0 32 32"><rect x="5.5" y="0.8" width="24.5" height="4.6" fill="#fff" stroke="#2f86d4" stroke-width="1.1"/><path d="M5.5,5.4 V16.5 M30,5.4 V16.5" stroke="#333" stroke-width="1"/><path d="M5.5,10 H30 M5.5,14 H30 M11.6,5.4 V16.5 M17.8,5.4 V16.5 M24,5.4 V16.5" stroke="#aaa" stroke-width="0.9"/><rect x="0" y="12" width="18" height="20" fill="#fff" opacity="0"/><g transform="translate(0,10.2) scale(1.25)"><path d="M-0.5,5.5 L8,-0.5 L16.5,5.5 V16.5 H-0.5 Z" fill="#fff"/><path d="M1,5 L8,1 L15,5" fill="none" stroke="#333" stroke-width="1"/><rect x="0.4" y="4.6" width="15.2" height="1.3" fill="#333"/><ellipse cx="8" cy="3.6" rx="0.9" ry="0.6" fill="none" stroke="#333" stroke-width="0.6"/><path d="M2.8,6 V13 M4.6,6 V13 M11.4,6 V13 M13.2,6 V13" stroke="#333" stroke-width="0.9"/><path d="M6.6,13 V8.2 H9.4 V13" fill="none" stroke="#e8791e" stroke-width="0.9"/><path d="M1.8,13.8 H14.2 V15.3 H1.8 Z" fill="none" stroke="#333" stroke-width="0.9"/><rect x="0.5" y="15" width="15" height="0.9" fill="#333"/></g><circle cx="24.5" cy="24.4" r="8.5" fill="#fff"/><circle cx="24.5" cy="24.4" r="6.9" fill="#75b3e2" stroke="#1a6dc0" stroke-width="1.1"/><path d="M24.5,29.099999999999998 V19.5 M21.2,22.099999999999998 L24.5,19.5 L27.8,22.099999999999998" fill="none" stroke="#fff" stroke-width="1.1"/></svg><svg class=a style="left:746px;top:60px" width="32" height="32" viewBox="0 0 32 32"><rect x="5.5" y="0.8" width="24.5" height="4.6" fill="#fff" stroke="#2f86d4" stroke-width="1.1"/><path d="M5.5,5.4 V16.5 M30,5.4 V16.5" stroke="#333" stroke-width="1"/><path d="M5.5,10 H30 M5.5,14 H30 M11.6,5.4 V16.5 M17.8,5.4 V16.5 M24,5.4 V16.5" stroke="#aaa" stroke-width="0.9"/><rect x="0" y="12" width="18" height="20" fill="#fff" opacity="0"/><g transform="translate(0,10.2) scale(1.25)"><path d="M-0.5,5.5 L8,-0.5 L16.5,5.5 V16.5 H-0.5 Z" fill="#fff"/><path d="M1,5 L8,1 L15,5" fill="none" stroke="#333" stroke-width="1"/><rect x="0.4" y="4.6" width="15.2" height="1.3" fill="#333"/><ellipse cx="8" cy="3.6" rx="0.9" ry="0.6" fill="none" stroke="#333" stroke-width="0.6"/><path d="M2.8,6 V13 M4.6,6 V13 M11.4,6 V13 M13.2,6 V13" stroke="#333" stroke-width="0.9"/><path d="M6.6,13 V8.2 H9.4 V13" fill="none" stroke="#e8791e" stroke-width="0.9"/><path d="M1.8,13.8 H14.2 V15.3 H1.8 Z" fill="none" stroke="#333" stroke-width="0.9"/><rect x="0.5" y="15" width="15" height="0.9" fill="#333"/></g><circle cx="24.5" cy="24.4" r="8.5" fill="#fff"/><circle cx="24.5" cy="24.4" r="6.9" fill="#8ccf9d" stroke="#17a24a" stroke-width="1.1"/><path d="M20.5,24.7 L23.5,27.599999999999998 L28.8,21.599999999999998" fill="none" stroke="#fff" stroke-width="1.2"/></svg><svg class=a style="left:244px;top:84px" width="20" height="18" viewBox="0 0 20 18"><g transform="translate(2,8) scale(0.6)"><path d="M-0.5,5.5 L8,-0.5 L16.5,5.5 V16.5 H-0.5 Z" fill="#fff"/><path d="M1,5 L8,1 L15,5" fill="none" stroke="#333" stroke-width="1"/><rect x="0.4" y="4.6" width="15.2" height="1.3" fill="#333"/><ellipse cx="8" cy="3.6" rx="0.9" ry="0.6" fill="none" stroke="#333" stroke-width="0.6"/><path d="M2.8,6 V13 M4.6,6 V13 M11.4,6 V13 M13.2,6 V13" stroke="#333" stroke-width="0.9"/><path d="M6.6,13 V8.2 H9.4 V13" fill="none" stroke="#e8791e" stroke-width="0.9"/><path d="M1.8,13.8 H14.2 V15.3 H1.8 Z" fill="none" stroke="#333" stroke-width="0.9"/><rect x="0.5" y="15" width="15" height="0.9" fill="#333"/></g><path d="M8.5,2 H5.3 Q4,2 4,3.3 V7.5" fill="none" stroke="#2a88d8" stroke-width="1.1"/><path d="M2.3,5.8 L4,7.6 L5.7,5.8" fill="none" stroke="#2a88d8" stroke-width="1.1"/><ellipse cx="14.5" cy="3.3" rx="3.6" ry="2" fill="#fff" stroke="#e8791e" stroke-width="1.2"/><path d="M10.9,3.3 V8 Q10.9,10 14.5,10 Q18.1,10 18.1,8 V3.3" fill="#f3c49a" stroke="#e8791e" stroke-width="1.2"/><path d="M9,6.5 Q9,11 12.5,11.2 Q15.5,11 15.8,9.5" fill="none" stroke="#e8791e" stroke-width="1.4"/></svg><svg class=a style="left:244px;top:109px" width="20" height="18" viewBox="0 0 20 18"><g transform="translate(2,1)"><path d="M1,5 L8,1 L15,5" fill="none" stroke="#333" stroke-width="1"/><rect x="0.4" y="4.5" width="15.2" height="1.4" fill="#333"/><path d="M2.8,6 V13.5 M5,6 V13.5 M12.5,6 V8.5 M14,6 V8.5" stroke="#333" stroke-width="0.9"/><path d="M7.5,13 V8 H10 V10" fill="none" stroke="#e8791e" stroke-width="1"/><path d="M2,13.8 H8 M0.5,15.5 H8.5" stroke="#333" stroke-width="1"/></g><path d="M13.5,9 L18.5,17 H8.5 Z" fill="#fff" stroke="#e8791e" stroke-width="1.2" stroke-linejoin="round"/><path d="M13.5,11.5 V14.2 M13.5,15.2 V16" stroke="#e8791e" stroke-width="1"/></svg>
<svg class=a style="left:449px;top:175px" width="18" height="18" viewBox="0 0 18 18"><path d="M1.5,5 L8,1.2 L14.5,5" fill="none" stroke="#333" stroke-width="1"/><rect x="1" y="4.6" width="14" height="1.2" fill="#333"/><path d="M8,3 v1" stroke="#333" stroke-width="0.8"/><path d="M3,6 v0.8 h3 v-0.8 M3.6,6.8 V13.5 M5.4,6.8 V13.5 M2.5,15 v-1.3 h4 v1.3 M0.8,15.5 H9" fill="none" stroke="#333" stroke-width="1"/><path d="M8,14 V7.5 H10" fill="none" stroke="#e8791e" stroke-width="0.9"/><circle cx="12.6" cy="12.3" r="5" fill="#fff"/><circle cx="12.6" cy="12.3" r="4" fill="#fff" stroke="#1faa50" stroke-width="1.1"/><path d="M10.4,12.4 L12,14 L14.9,11" fill="none" stroke="#1faa50" stroke-width="1.1"/></svg>
<svg class=a style="left:1806px;top:1031px" width="20" height="20" viewBox="0 0 20 20"><defs><linearGradient id="gb" x1="0" x2="1"><stop offset="0" stop-color="#7fb2e8"/><stop offset="1" stop-color="#2a5fa8"/></linearGradient><linearGradient id="gy" x1="0" x2="1"><stop offset="0" stop-color="#f8e05a"/><stop offset="1" stop-color="#c99a10"/></linearGradient><linearGradient id="gr" x1="0" x2="1"><stop offset="0" stop-color="#f88a5a"/><stop offset="1" stop-color="#c0301a"/></linearGradient></defs><rect x="2" y="7" width="4.8" height="11" rx="1.2" fill="url(#gb)"/><rect x="7" y="2" width="5" height="16" rx="1.2" fill="url(#gy)"/><rect x="12" y="5" width="5" height="13" rx="1.2" fill="url(#gr)"/></svg>
<svg class=a style="left:1839px;top:1031px" width="22" height="20" viewBox="0 0 22 20"><rect x="2.5" y="2" width="13.5" height="12.5" fill="#fff" stroke="#5577cc" stroke-width="1"/><rect x="2.5" y="2" width="13.5" height="2.5" fill="#5a86e0"/><path d="M2.5,8 H16 M2.5,11 H16 M6.5,4.5 V14.5 M10.5,4.5 V14.5" stroke="#aabbdd" stroke-width="0.8"/><rect x="8" y="7.5" width="10" height="10" fill="#fff" stroke="#2e8b2e" stroke-width="1.2"/><path d="M10,9.5 L16,15.5 M16,9.5 L10,15.5" stroke="#2e9a2e" stroke-width="2"/></svg>
<svg class=a style="left:1872px;top:1031px" width="20" height="20" viewBox="0 0 20 20"><rect x="5" y="2.5" width="10" height="5" fill="#fff" stroke="#333" stroke-width="1.1"/><rect x="2" y="7.5" width="16" height="7.5" fill="#9fd3f5" stroke="#1a6fc0" stroke-width="1.1"/><rect x="5" y="12" width="10" height="6.5" fill="#fff" stroke="#333" stroke-width="1.1"/><path d="M7,14.5 H13 M7,16.5 H13" stroke="#333" stroke-width="0.8"/></svg>
<svg class=a style="left:647px;top:1060px" width="15" height="16" viewBox="0 0 15 16"><circle cx="7" cy="4.8" r="3.3" fill="none" stroke="#111" stroke-width="1.1"/><path d="M1.2,14 Q1.8,9 7,9 Q12.2,9 12.8,14" fill="none" stroke="#111" stroke-width="1.1" stroke-linecap="round"/></svg>
<svg class=a style="left:789px;top:1061px" width="16" height="16" viewBox="0 0 16 16"><rect x="3.5" y="1.5" width="8" height="3.5" fill="none" stroke="#111" stroke-width="1.1"/><rect x="1" y="5" width="13" height="6" rx="1.5" fill="none" stroke="#111" stroke-width="1.1"/><rect x="3.5" y="9" width="8" height="5" fill="#f0f0f0" stroke="#111" stroke-width="1.1"/></svg>
<svg class=a style="left:1160px;top:1060px" width="17" height="18" viewBox="0 0 17 18"><circle cx="10.5" cy="6.8" r="5.2" fill="none" stroke="#111" stroke-width="1.2"/><path d="M6.8,10.6 L1.6,15.8" stroke="#111" stroke-width="1.3"/></svg>
<svg class=a style="left:929px;top:853px" width="18" height="17" viewBox="0 0 18 17"><rect x="1" y="1" width="14" height="13" fill="#999"/><path d="M2.2,4 h3 v1.6 h-3z M6.2,4 h3 v1.6 h-3z M2.2,7.2 h3 v1.6 h-3z M2.2,10.3 h3 v1.6 h-3z" fill="#fff"/><rect x="7" y="6" width="10" height="9.5" fill="#999" stroke="#f9f9f9" stroke-width="0.8"/><path d="M8.2,7.2 h7.5 v1.3 h-7.5z M8.2,12.8 h7.5 v1.3 h-7.5z" fill="#fff"/></svg>
<svg class=a style="left:966px;top:851px" width="24" height="23" viewBox="0 0 24 23"><rect x="6" y="1" width="12" height="6" fill="#9a9a9a"/><rect x="1" y="5.5" width="22" height="12" rx="2" fill="#7a7a7a"/><rect x="3.5" y="5" width="17" height="7" rx="1.8" fill="#9a9a9a"/><rect x="2.3" y="13.5" width="2" height="1.5" fill="#aaa"/><rect x="6" y="15" width="12" height="7" fill="#9a9a9a"/></svg>
<svg class=a style="left:1143px;top:849px" width="30" height="25" viewBox="0 0 30 25"><path d="M1,1 H29 V24 H1 Z" fill="#8a4f9e"/><rect x="6" y="1" width="16" height="8" fill="#fff"/><rect x="16" y="1.5" width="4" height="6" fill="#666"/><rect x="6" y="16" width="18" height="8" fill="#fff"/><path d="M8.5,18.5 H21.5 M8.5,20.8 H21.5 M8.5,23 H21.5" stroke="#9a9a9a" stroke-width="0.8"/></svg>
<svg class=a style="left:1268px;top:842px" width="32" height="24" viewBox="0 0 32 24"><path d="M4,11 L13,20.5 L28.5,4" fill="none" stroke="#4a9e7e" stroke-width="4.2" stroke-linecap="round" stroke-linejoin="round"/></svg>
<svg class=a style="left:1340px;top:842px" width="28" height="27" viewBox="0 0 28 27"><path d="M3.5,3 L25,24 M25,3 L3.5,24" fill="none" stroke="#d24a2c" stroke-width="4.2" stroke-linecap="round"/></svg>
</body></html>
